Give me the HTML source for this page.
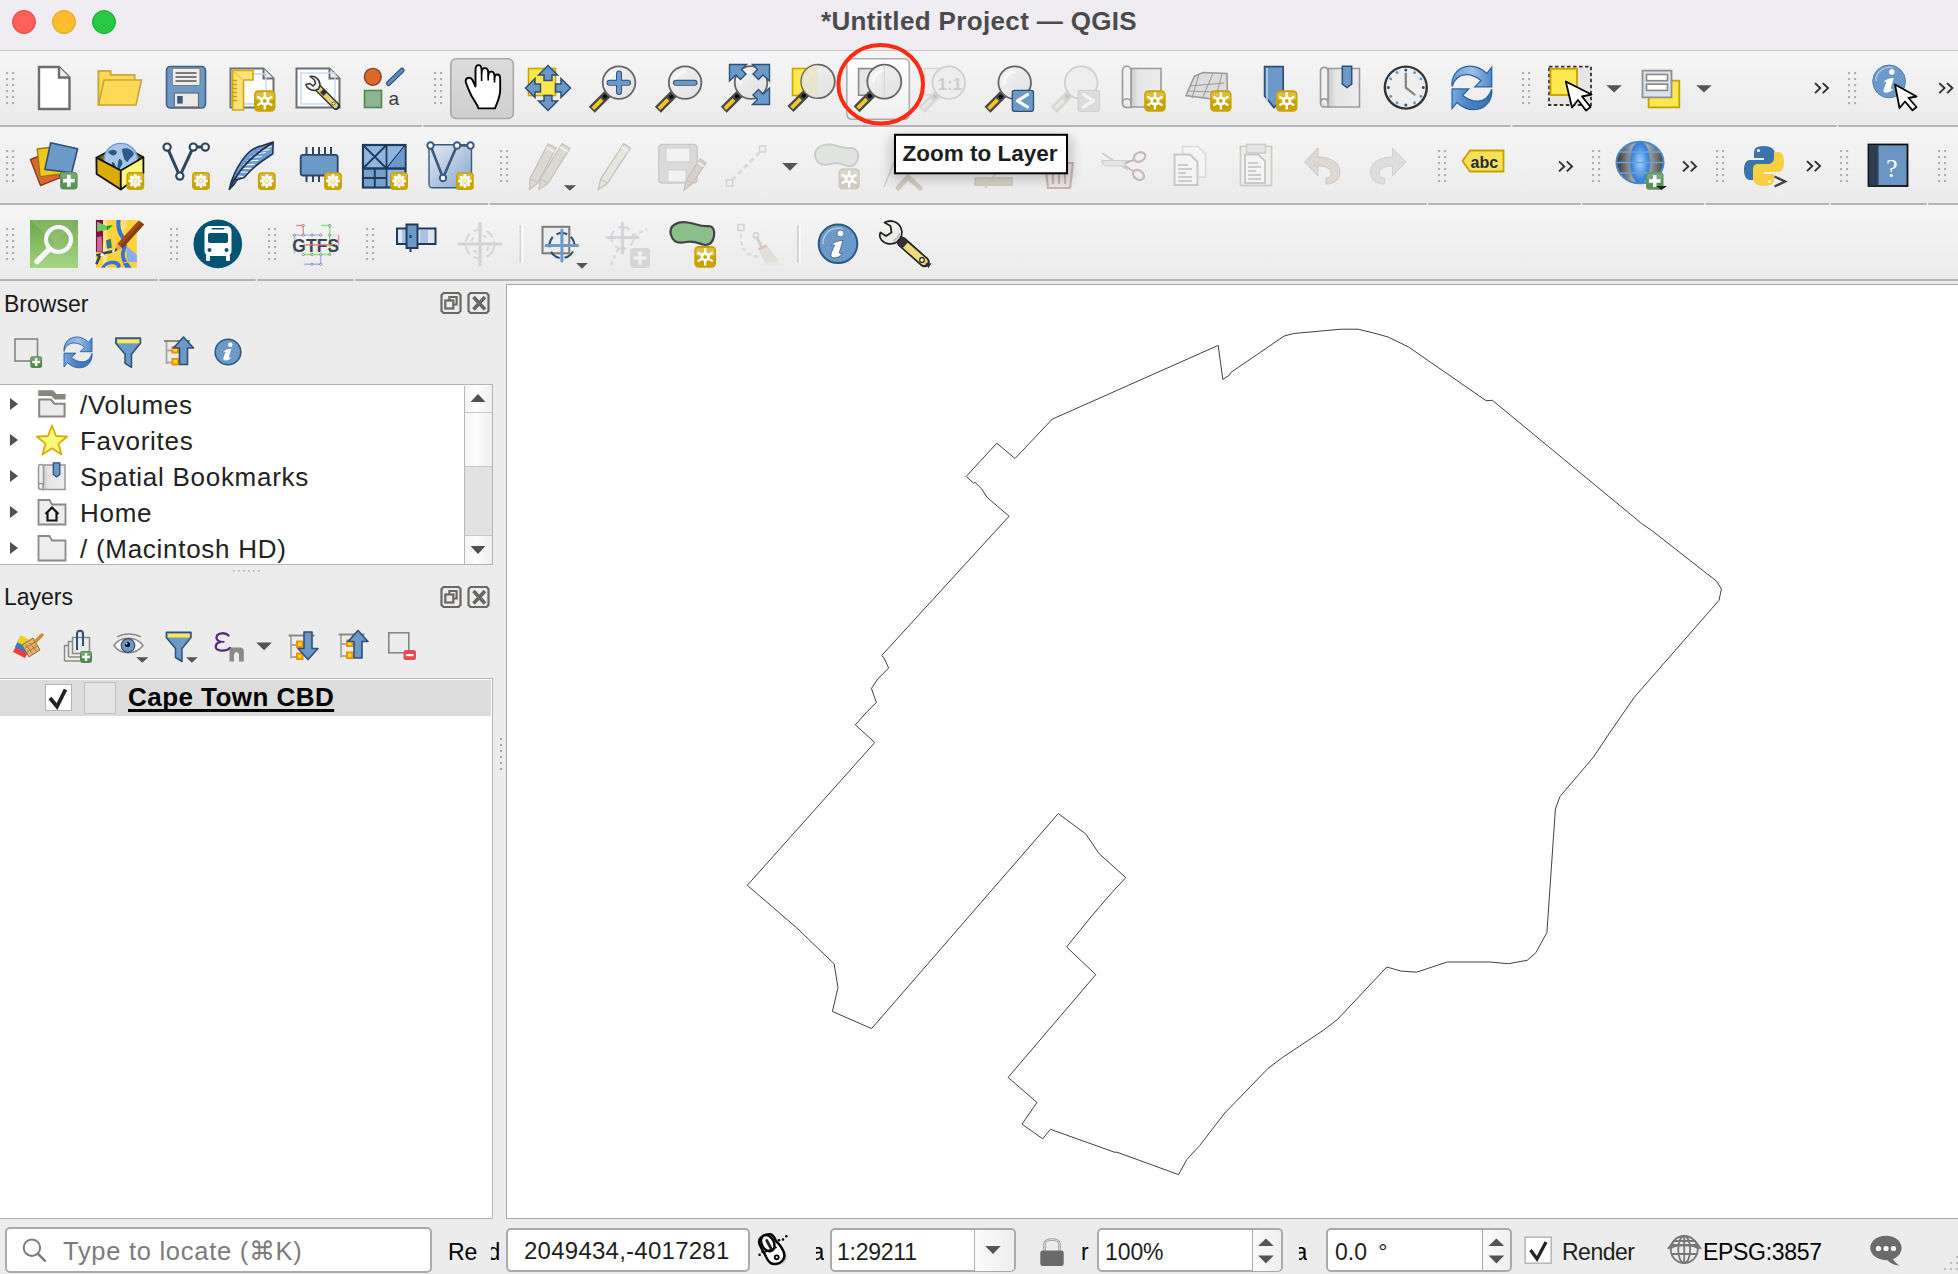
<!DOCTYPE html>
<html><head><meta charset="utf-8">
<style>
*{margin:0;padding:0;box-sizing:border-box}
html,body{width:1958px;height:1274px;overflow:hidden;background:#ececec;font-family:"Liberation Sans",sans-serif;position:relative}
.a{position:absolute}
#title{left:0;top:0;width:1958px;height:51px;background:#efecf2;border-bottom:1px solid #cac8cc}
#title .t{left:0;width:1958px;top:6px;text-align:center;font-weight:bold;font-size:26px;color:#4b4b4d;letter-spacing:0.35px}
.tl{width:24px;height:24px;border-radius:50%;top:10px}
.tb{left:0;width:1958px;background:linear-gradient(#f5f5f5,#ebebeb)}
.tbl{left:0;width:1958px;height:2px;background:#b4b4b4}
.grip{width:10px;background-image:radial-gradient(circle at 1px 1px,#a8a8a8 1px,transparent 1.2px);background-size:6px 6px}
.dock{font-size:23px;color:#1a1a1a}
.tree{font-size:26px;color:#222;letter-spacing:0.72px}
.st{font-size:25px;color:#1e1e1e}
.box{background:#fff;border:2px solid #aaa;border-radius:5px}
svg{overflow:visible}
</style></head><body>
<!-- title bar -->
<div id="title" class="a">
  <div class="a tl" style="left:12px;background:#fe5f57;border:1px solid #e2463f"></div>
  <div class="a tl" style="left:52px;background:#febc2e;border:1px solid #e1a116"></div>
  <div class="a tl" style="left:92px;background:#28c840;border:1px solid #12ac28"></div>
  <div class="a t">*Untitled Project — QGIS</div>
</div>
<!-- toolbars -->
<div class="a tb" style="top:51px;height:74px"></div>
<div class="a tbl" style="top:125px"></div>
<div class="a tb" style="top:127px;height:76px"></div>
<div class="a tbl" style="top:203px"></div>
<div class="a tb" style="top:205px;height:74px"></div>
<div class="a tbl" style="top:279px"></div>

<!-- left panel -->
<div class="a dock" style="left:4px;top:291px">Browser</div>
<div class="a dock" style="left:4px;top:584px">Layers</div>

<!-- browser tree -->
<div class="a" style="left:0;top:384px;width:493px;height:181px;background:#fff;border:1.5px solid #b4b4b4;border-left:none"></div>

<!-- layers tree -->
<div class="a" style="left:0;top:678px;width:493px;height:540.5px;background:#fff;border:1.5px solid #b4b4b4;border-left:none"></div>

<!-- map canvas -->
<div class="a" style="left:505.5px;top:284px;width:1453px;height:934.5px;background:#fff;border:1.5px solid #a8a8a8;border-right:none"></div>

<!-- status bar -->
<div class="a box" style="left:5px;top:1227px;width:427px;height:46px"></div>
<div class="a box" style="left:506px;top:1228px;width:244px;height:44px"></div>
<div class="a box" style="left:830px;top:1228px;width:186px;height:44px"></div>
<div class="a box" style="left:1097px;top:1228px;width:186px;height:44px"></div>
<div class="a box" style="left:1326px;top:1228px;width:186px;height:44px"></div>

<!-- browser tree contents -->
<div class="a" style="left:464px;top:385.5px;width:27.5px;height:178px;background:linear-gradient(90deg,#f4f4f4,#fdfdfd 40%,#efefef);border-left:1.2px solid #b8b8b8"></div>
<div class="a" style="left:465px;top:412px;width:27px;height:1px;background:#c8c8c8"></div>
<div class="a" style="left:465px;top:466px;width:27px;height:70px;background:#e2e2e2;border-top:1px solid #c8c8c8;border-bottom:1px solid #c8c8c8"></div>
<div class="a tree" style="left:80px;top:390px">/Volumes</div>
<div class="a tree" style="left:80px;top:426px">Favorites</div>
<div class="a tree" style="left:80px;top:462px">Spatial Bookmarks</div>
<div class="a tree" style="left:80px;top:498px">Home</div>
<div class="a tree" style="left:80px;top:534px">/ (Macintosh HD)</div>

<!-- layer item -->
<div class="a" style="left:0;top:680px;width:491px;height:36px;background:#dcdcdc"></div>
<div class="a" style="left:45px;top:684px;width:27px;height:27px;background:#fff;border:1.5px solid #b4b4b4"></div>
<div class="a" style="left:84px;top:682px;width:32px;height:32px;background:#e4e4e4;border:1.5px solid #c0c0c0"></div>
<div class="a" style="left:128px;top:682px;font-weight:bold;font-size:26px;color:#000;letter-spacing:0.45px;text-decoration:underline;text-decoration-thickness:3px;text-underline-offset:3px;text-decoration-skip-ink:none">Cape Town CBD</div>

<div class="a" style="left:974px;top:1230px;width:40px;height:41px;background:linear-gradient(90deg,#fbfbfb,#eeeeee);border-left:1.5px solid #b0b0b0;border-radius:0 4px 4px 0"></div>
<div class="a" style="left:1252px;top:1230px;width:29px;height:41px;background:linear-gradient(90deg,#fbfbfb,#efefef);border-left:1.5px solid #a8a8a8;border-radius:0 4px 4px 0"></div>
<div class="a" style="left:1482px;top:1230px;width:28px;height:40px;background:linear-gradient(90deg,#fbfbfb,#efefef);border-left:1.5px solid #a8a8a8;border-radius:0 4px 4px 0"></div>
<!-- status bar text -->
<div class="a st" style="left:63px;top:1236px;font-size:25.5px;color:#7b7b7b;letter-spacing:0.72px">Type to locate (⌘K)</div>
<div class="a st" style="left:448px;top:1239px;font-size:23px;color:#000">Re</div>
<div class="a" style="left:491px;top:1238px;width:10px;height:27px;overflow:hidden"><div class="a st" style="left:-3.5px;top:1px;font-size:23px;color:#000">d</div></div>
<div class="a st" style="left:524px;top:1237px;font-size:24px;letter-spacing:0.25px">2049434,-4017281</div>
<div class="a" style="left:816px;top:1238px;width:8px;height:27px;overflow:hidden"><div class="a st" style="left:-4.5px;top:1px;font-size:23px;color:#000">a</div></div>
<div class="a st" style="left:837px;top:1239px;font-size:23px;letter-spacing:-0.25px">1:29211</div>
<div class="a st" style="left:1081px;top:1239px;font-size:23px;color:#000">r</div>
<div class="a st" style="left:1105px;top:1239px;font-size:23px;letter-spacing:-0.1px">100%</div>
<div class="a" style="left:1299px;top:1238px;width:8px;height:27px;overflow:hidden"><div class="a st" style="left:-4.5px;top:1px;font-size:23px;color:#000">a</div></div>
<div class="a st" style="left:1335px;top:1239px;font-size:23px;word-spacing:5px">0.0 °</div>
<div class="a st" style="left:1562px;top:1239px;font-size:23px;letter-spacing:-0.5px">Render</div>
<div class="a st" style="left:1703px;top:1239px;font-size:23px;letter-spacing:-0.3px;color:#000">EPSG:3857</div>

<svg class="a" style="left:0;top:0;position:absolute" width="1958" height="1274"><polygon points="966.2,476.5 996.8,443.2 1015,458.5 1052.2,419.2 1218.2,345.4 1222.8,379.5 1229.4,375.1 1231,372.3 1284.4,335.9 1293.8,333.5 1340.9,329.2 1358.1,329.2 1377,333.9 1388,337 1408.4,346.9 1486.1,400.7 1492.4,400.3 1641.6,523.5 1652.8,531.3 1716.7,581.3 1721.4,589.1 1719,600.3 1634,697.6 1609,733.8 1593.4,757.2 1560,796.5 1555.4,809 1546.9,932.6 1535.8,952.8 1527.2,960.3 1508.5,963.7 1489.5,962 1447.2,962 1416.6,972.2 1400.6,971 1386.8,967 1337.5,1019.4 1323.2,1030.4 1282.6,1057.4 1268,1068.4 1224.8,1113 1199.7,1145.5 1186.8,1159.6 1178.5,1174.6 1117,1152.2 1114.4,1152.2 1050.4,1129.3 1042.7,1138.8 1022,1124.1 1037,1102.5 1008.1,1077.4 1095.8,974.6 1066.6,947 1092,915.6 1111.7,892.8 1125.8,877.6 1099.1,853.6 1085.8,834 1058.3,813.5 871.6,1028.6 832.4,1011.5 838,987.7 834.1,963.8 796.5,927.7 747.3,885.3 874.8,742.5 855.3,724.9 867,711.7 876.4,702.5 871.4,688.5 877.7,679 888.7,668.1 884.2,658.3 881.7,655.5 1009.1,516.2 987.1,497.4 981.6,488.8 974.9,482.2 973.75,483.3" fill="none" stroke="#404040" stroke-width="1" stroke-linejoin="round"/></svg>
<svg class="a" style="left:0;top:0;position:absolute" width="1958" height="1274" viewBox="0 0 1958 1274">
<defs><linearGradient id="lensg" x1="0" y1="0" x2="1" y2="1"><stop offset="0" stop-color="#f6f6f6"/><stop offset=".5" stop-color="#e9e9e9"/><stop offset="1" stop-color="#e2e2e2"/></linearGradient></defs>
<rect x="6.5" y="72.5" width="2.2" height="2.2" fill="#fbfbfb"/><rect x="6" y="72" width="2.2" height="2.2" fill="#b0b0b0"/>
<rect x="12.5" y="72.5" width="2.2" height="2.2" fill="#fbfbfb"/><rect x="12" y="72" width="2.2" height="2.2" fill="#b0b0b0"/>
<rect x="6.5" y="78.5" width="2.2" height="2.2" fill="#fbfbfb"/><rect x="6" y="78" width="2.2" height="2.2" fill="#b0b0b0"/>
<rect x="12.5" y="78.5" width="2.2" height="2.2" fill="#fbfbfb"/><rect x="12" y="78" width="2.2" height="2.2" fill="#b0b0b0"/>
<rect x="6.5" y="84.5" width="2.2" height="2.2" fill="#fbfbfb"/><rect x="6" y="84" width="2.2" height="2.2" fill="#b0b0b0"/>
<rect x="12.5" y="84.5" width="2.2" height="2.2" fill="#fbfbfb"/><rect x="12" y="84" width="2.2" height="2.2" fill="#b0b0b0"/>
<rect x="6.5" y="90.5" width="2.2" height="2.2" fill="#fbfbfb"/><rect x="6" y="90" width="2.2" height="2.2" fill="#b0b0b0"/>
<rect x="12.5" y="90.5" width="2.2" height="2.2" fill="#fbfbfb"/><rect x="12" y="90" width="2.2" height="2.2" fill="#b0b0b0"/>
<rect x="6.5" y="96.5" width="2.2" height="2.2" fill="#fbfbfb"/><rect x="6" y="96" width="2.2" height="2.2" fill="#b0b0b0"/>
<rect x="12.5" y="96.5" width="2.2" height="2.2" fill="#fbfbfb"/><rect x="12" y="96" width="2.2" height="2.2" fill="#b0b0b0"/>
<rect x="6.5" y="102.5" width="2.2" height="2.2" fill="#fbfbfb"/><rect x="6" y="102" width="2.2" height="2.2" fill="#b0b0b0"/>
<rect x="12.5" y="102.5" width="2.2" height="2.2" fill="#fbfbfb"/><rect x="12" y="102" width="2.2" height="2.2" fill="#b0b0b0"/>
<path d="M39,67H59.0L69.5,77.5V109H39Z" fill="#fff" stroke="#6e6e6e" stroke-width="2.4" stroke-linejoin="miter"/>
<path d="M59.0,67V77.5H69.5" fill="#eee" stroke="#6e6e6e" stroke-width="2.4"/>
<path d="M98.5,104.5V71H110.5V75H134.5V80" fill="#fdd94f" stroke="#c6a53a" stroke-width="1.6"/>
<path d="M98.5,71H110.5V75H134.5V104.5H98.5Z" fill="#fdd94f" stroke="#c6a53a" stroke-width="1.6"/>
<path d="M98.5,105L104,80H141.5L136,105Z" fill="#fed955" stroke="#c6a53a" stroke-width="1.6"/>
<rect x="166.5" y="66.5" width="39" height="41.5" rx="4" fill="#6b9ac9" stroke="#3f6085" stroke-width="1.6"/>
<rect x="172.3" y="68.3" width="27.7" height="17.2" rx="1.5" fill="#eeeeee" stroke="#7a7a7a" stroke-width="1"/>
<path d="M175.5,73H196.5M175.5,77H196.5M175.5,81H196.5" stroke="#555" stroke-width="1.3"/>
<rect x="174.3" y="93" width="24.2" height="14" fill="#e9e9e9" stroke="#6a6a6a" stroke-width="1.2"/>
<rect x="177.2" y="96" width="5.5" height="7.6" fill="#3d5a7c"/>
<path d="M230.5,68.5H263.5L273.5,78.5V107.5H230.5Z" fill="#fff" stroke="#6e6e6e" stroke-width="2" stroke-linejoin="miter"/>
<path d="M263.5,68.5V78.5H273.5" fill="#eee" stroke="#6e6e6e" stroke-width="2"/>
<path d="M236,74H266V104H236" fill="none" stroke="#c0d4f4" stroke-width="1.3"/>
<path d="M232.6,70.5H253V80H243.5V110H232.6Z" fill="#fde27a" stroke="#d4a800" stroke-width="1.6"/>
<path d="M233,80.5h4M233,84.5h4M233,88.5h4M233,92.5h4M233,96.5h4M233,100.5h4" stroke="#c89b00" stroke-width="1.3"/>
<path d="M234,72L242,79" stroke="#e0b810" stroke-width="1"/>
<g transform="translate(254,90.2) scale(0.9772727272727273)"><rect x="0" y="0" width="22" height="22" rx="4.5" fill="#c9a300"/><rect x="1.5" y="2" width="19" height="8.5" rx="2.5" fill="#dcc350" opacity=".85"/><g stroke="#fff" stroke-width="2.3"><path d="M11 2.2v17.6M3.4 6.6l15.2 8.8M3.4 15.4l15.2-8.8"/></g><circle cx="11" cy="11" r="4.6" fill="#fff"/><circle cx="11" cy="11" r="1.9" fill="#c9a300"/></g>
<path d="M296.5,68.5H329.5L339.5,78.5V107.5H296.5Z" fill="#fff" stroke="#6e6e6e" stroke-width="2" stroke-linejoin="miter"/>
<path d="M329.5,68.5V78.5H339.5" fill="#eee" stroke="#6e6e6e" stroke-width="2"/>
<rect x="301" y="73" width="34" height="31" fill="none" stroke="#c0d4f4" stroke-width="1.3"/>
<path d="M318,88L336,106" stroke="#333" stroke-width="8" stroke-linecap="round"/>
<path d="M318.5,88.5L335.5,105.5" stroke="#e8d070" stroke-width="5" stroke-linecap="round"/>
<path d="M322,90.5L325.5,94" stroke="#333" stroke-width="5.5"/>
<path d="M310,76.5C315,75.5 320,79 320,85L318.5,89L314.5,90.5C309.5,90.5 306,87 306,84.5L310,83.5L313,86L315.5,83.5L314.5,80Z" fill="#eceeea" stroke="#333" stroke-width="1.5" stroke-linejoin="round"/>
<circle cx="333.5" cy="103.5" r="1.5" fill="#fff" stroke="#333" stroke-width=".8"/>
<circle cx="372.8" cy="76.8" r="8.4" fill="#d9692f" stroke="#8a3f1c" stroke-width="1.4"/>
<line x1="388.5" y1="83.4" x2="402" y2="70.3" stroke="#2f4f77" stroke-width="5.2" stroke-linecap="round"/>
<line x1="388.5" y1="83.4" x2="402" y2="70.3" stroke="#5b8ac4" stroke-width="3" stroke-linecap="round"/>
<rect x="364.5" y="90.5" width="17" height="17" fill="#8fb48f" stroke="#4e8a4e" stroke-width="1.6"/>
<text x="388.5" y="105.3" font-family="Liberation Sans" font-size="19" fill="#3a3a3a">a</text>
<rect x="434.5" y="72.5" width="2.2" height="2.2" fill="#fbfbfb"/><rect x="434" y="72" width="2.2" height="2.2" fill="#b0b0b0"/>
<rect x="440.5" y="72.5" width="2.2" height="2.2" fill="#fbfbfb"/><rect x="440" y="72" width="2.2" height="2.2" fill="#b0b0b0"/>
<rect x="434.5" y="78.5" width="2.2" height="2.2" fill="#fbfbfb"/><rect x="434" y="78" width="2.2" height="2.2" fill="#b0b0b0"/>
<rect x="440.5" y="78.5" width="2.2" height="2.2" fill="#fbfbfb"/><rect x="440" y="78" width="2.2" height="2.2" fill="#b0b0b0"/>
<rect x="434.5" y="84.5" width="2.2" height="2.2" fill="#fbfbfb"/><rect x="434" y="84" width="2.2" height="2.2" fill="#b0b0b0"/>
<rect x="440.5" y="84.5" width="2.2" height="2.2" fill="#fbfbfb"/><rect x="440" y="84" width="2.2" height="2.2" fill="#b0b0b0"/>
<rect x="434.5" y="90.5" width="2.2" height="2.2" fill="#fbfbfb"/><rect x="434" y="90" width="2.2" height="2.2" fill="#b0b0b0"/>
<rect x="440.5" y="90.5" width="2.2" height="2.2" fill="#fbfbfb"/><rect x="440" y="90" width="2.2" height="2.2" fill="#b0b0b0"/>
<rect x="434.5" y="96.5" width="2.2" height="2.2" fill="#fbfbfb"/><rect x="434" y="96" width="2.2" height="2.2" fill="#b0b0b0"/>
<rect x="440.5" y="96.5" width="2.2" height="2.2" fill="#fbfbfb"/><rect x="440" y="96" width="2.2" height="2.2" fill="#b0b0b0"/>
<rect x="434.5" y="102.5" width="2.2" height="2.2" fill="#fbfbfb"/><rect x="434" y="102" width="2.2" height="2.2" fill="#b0b0b0"/>
<rect x="440.5" y="102.5" width="2.2" height="2.2" fill="#fbfbfb"/><rect x="440" y="102" width="2.2" height="2.2" fill="#b0b0b0"/>
<defs><linearGradient id="gbtn" x1="0" y1="0" x2="0" y2="1"><stop offset="0" stop-color="#dcdcdc"/><stop offset="1" stop-color="#cfcfcf"/></linearGradient><linearGradient id="wbtn" x1="0" y1="0" x2="0" y2="1"><stop offset="0" stop-color="#ffffff"/><stop offset="1" stop-color="#efefef"/></linearGradient></defs>
<rect x="450.8" y="58.8" width="62.5" height="59.7" rx="5" fill="url(#gbtn)" stroke="#a9a9a9" stroke-width="1.6"/>
<path d="M475.5,86.5V70C475.5,63.5 481.6,63.5 481.6,70V73C481.6,66.5 488.2,66.5 488.2,73V76.5C488.2,70 494.5,70 494.5,76.5V79C494.5,73 500.2,73 500.2,79V90C500.2,97 497,103 495,108.4H478.5C477.5,105 476,103 474,100C471,96 470,93 468,88C466.5,84 465,81.5 465.8,80C467,77 471,77 472.5,80Z" fill="#fff" stroke="#000" stroke-width="1.9" stroke-linejoin="round"/>
<path d="M481.6,73V81M488.2,76.5V80.5M494.5,79V82.5" stroke="#000" stroke-width="1.6"/>
<rect x="528.5" y="68.5" width="27" height="27" fill="#fde84f" stroke="#c8a800" stroke-width="1.6"/>
<g fill="#6b99c8" stroke="#2f4f77" stroke-width="1.5" stroke-linejoin="miter"><path d="M548,65.5L557.5,75H552V80.5H544V75H538.5Z"/><path d="M548,110.5L557.5,101H552V95.5H544V101H538.5Z"/><path d="M525.5,88L535,78.5V84H540.5V92H535V97.5Z"/><path d="M570.5,88L561,78.5V84H555.5V92H561V97.5Z"/></g>
<line x1="607.59" y1="94.00999999999999" x2="591.7900000000001" y2="109.80999999999999" stroke="#474747" stroke-width="8.4"/>
<line x1="601.902" y1="99.698" x2="592.8960000000001" y2="108.704" stroke="#f5c62a" stroke-width="3.8000000000000007"/>
<circle cx="605.062" cy="96.538" r="2.1" fill="#000"/>
<circle cx="619" cy="82.6" r="16.3" fill="url(#lensg)" stroke="#656565" stroke-width="1.8"/>
<path d="M608.894,84.22999999999999 A10.758000000000001,10.758000000000001 0 0 1 619.815,71.842" fill="none" stroke="#fafafa" stroke-width="2.6" opacity=".9"/>
<path d="M619,73.5V92M609.5,82.8H628" stroke="#2f4f77" stroke-width="6" stroke-linecap="round"/>
<path d="M619,73.5V92M609.5,82.8H628" stroke="#6b99c8" stroke-width="4.2" stroke-linecap="round"/>
<line x1="673.69" y1="94.00999999999999" x2="657.8900000000001" y2="109.80999999999999" stroke="#474747" stroke-width="8.4"/>
<line x1="668.0020000000001" y1="99.698" x2="658.9960000000001" y2="108.704" stroke="#f5c62a" stroke-width="3.8000000000000007"/>
<circle cx="671.162" cy="96.538" r="2.1" fill="#000"/>
<circle cx="685.1" cy="82.6" r="16.3" fill="url(#lensg)" stroke="#656565" stroke-width="1.8"/>
<path d="M674.994,84.22999999999999 A10.758000000000001,10.758000000000001 0 0 1 685.9150000000001,71.842" fill="none" stroke="#fafafa" stroke-width="2.6" opacity=".9"/>
<path d="M676,82.8H694.5" stroke="#2f4f77" stroke-width="6" stroke-linecap="round"/><path d="M676,82.8H694.5" stroke="#6b99c8" stroke-width="4.2" stroke-linecap="round"/>
<line x1="739.59" y1="93.91" x2="723.7900000000001" y2="109.71" stroke="#474747" stroke-width="8.4"/>
<line x1="733.902" y1="99.598" x2="724.8960000000001" y2="108.604" stroke="#f5c62a" stroke-width="3.8000000000000007"/>
<circle cx="737.062" cy="96.438" r="2.1" fill="#000"/>
<circle cx="751" cy="82.5" r="16.3" fill="url(#lensg)" stroke="#656565" stroke-width="1.8"/>
<path d="M740.894,84.13 A10.758000000000001,10.758000000000001 0 0 1 751.815,71.742" fill="none" stroke="#fafafa" stroke-width="2.6" opacity=".9"/>
<g fill="#6b99c8" stroke="#2f4f77" stroke-width="1.4"><path d="M729.5,64.5H746.5L741.5,69.5L746,74L740.5,79.5L736,75L729.5,81Z"/><path d="M769.5,64.5H752.5L757.5,69.5L753,74L758.5,79.5L763,75L769.5,81Z"/><path d="M769.5,104.5H752.5L757.5,99.5L753,95L758.5,89.5L763,94L769.5,88Z"/></g>
<rect x="792.5" y="68.5" width="16" height="27" fill="#fde84f" stroke="#c8a800" stroke-width="1.6"/>
<line x1="806.24" y1="93.16000000000001" x2="790.44" y2="108.96000000000001" stroke="#474747" stroke-width="8.4"/>
<line x1="800.552" y1="98.84800000000001" x2="791.546" y2="107.85400000000001" stroke="#f5c62a" stroke-width="3.8000000000000007"/>
<circle cx="803.712" cy="95.68800000000002" r="2.1" fill="#000"/>
<circle cx="818" cy="81.4" r="16.8" fill="url(#lensg)" stroke="#656565" stroke-width="1.8"/>
<path d="M807.584,83.08000000000001 A11.088000000000001,11.088000000000001 0 0 1 818.84,70.31200000000001" fill="none" stroke="#fafafa" stroke-width="2.6" opacity=".9"/>
<path d="M818,65 A16.4,16.4 0 0 0 818,97.8Z" fill="#e9e4c4" opacity=".8"/>
<rect x="846.8" y="58.8" width="62.5" height="60.5" rx="5" fill="url(#wbtn)" stroke="#acacac" stroke-width="1.6"/>
<rect x="858.6" y="68.6" width="27" height="26.6" fill="#e6e6e6" stroke="#8a8a8a" stroke-width="1.6"/>
<line x1="872.4" y1="93.5" x2="856.6" y2="109.3" stroke="#474747" stroke-width="8.4"/>
<line x1="866.712" y1="99.188" x2="857.706" y2="108.194" stroke="#f5c62a" stroke-width="3.8000000000000007"/>
<circle cx="869.872" cy="96.028" r="2.1" fill="#000"/>
<circle cx="884.3" cy="81.6" r="17" fill="url(#lensg)" stroke="#656565" stroke-width="1.8"/>
<path d="M873.76,83.3 A11.22,11.22 0 0 1 885.15,70.38" fill="none" stroke="#fafafa" stroke-width="2.6" opacity=".9"/>
<path d="M884.3,65 V98" stroke="#d6d6d6" stroke-width="1.2"/>
<rect x="924.5" y="68.5" width="16" height="26.3" fill="#efefef" stroke="#d6d6d6" stroke-width="1.5"/>
<line x1="937.39" y1="94.00999999999999" x2="921.59" y2="109.80999999999999" stroke="#d6d6d6" stroke-width="8.4"/>
<line x1="931.702" y1="99.698" x2="922.696" y2="108.704" stroke="#e8e5dc" stroke-width="3.8000000000000007"/>
<circle cx="934.862" cy="96.538" r="2.1" fill="#c4c4c4"/>
<circle cx="948.8" cy="82.6" r="16.3" fill="#eeeeee" stroke="#d0d0d0" stroke-width="1.8"/>
<text x="937.5" y="89.5" font-family="Liberation Sans" font-weight="bold" font-size="17" fill="#cdcdcd">1:1</text>
<line x1="1003.2900000000001" y1="94.00999999999999" x2="987.4900000000001" y2="109.80999999999999" stroke="#474747" stroke-width="8.4"/>
<line x1="997.6020000000001" y1="99.698" x2="988.5960000000001" y2="108.704" stroke="#f5c62a" stroke-width="3.8000000000000007"/>
<circle cx="1000.7620000000001" cy="96.538" r="2.1" fill="#000"/>
<circle cx="1014.7" cy="82.6" r="16.3" fill="url(#lensg)" stroke="#656565" stroke-width="1.8"/>
<path d="M1004.594,84.22999999999999 A10.758000000000001,10.758000000000001 0 0 1 1015.5150000000001,71.842" fill="none" stroke="#fafafa" stroke-width="2.6" opacity=".9"/>
<rect x="1012.3" y="90.3" width="21.2" height="21" rx="2.2" fill="#6b99c8" stroke="#2f4f77" stroke-width="1.3"/>
<path d="M1027.5,94.5L1017.5,100.8L1027.5,107" fill="none" stroke="#fff" stroke-width="3.2" stroke-linecap="round" stroke-linejoin="round"/>
<line x1="1069.6899999999998" y1="94.00999999999999" x2="1053.8899999999999" y2="109.80999999999999" stroke="#d6d6d6" stroke-width="8.4"/>
<line x1="1064.002" y1="99.698" x2="1054.9959999999999" y2="108.704" stroke="#e8e5dc" stroke-width="3.8000000000000007"/>
<circle cx="1067.1619999999998" cy="96.538" r="2.1" fill="#c4c4c4"/>
<circle cx="1081.1" cy="82.6" r="16.3" fill="#eeeeee" stroke="#d0d0d0" stroke-width="1.8"/>
<rect x="1078.2" y="90.3" width="21.2" height="21" rx="2.2" fill="#dcdcdc" stroke="#d2d2d2" stroke-width="1.3"/>
<path d="M1083.5,94.5L1093.5,100.8L1083.5,107" fill="none" stroke="#f4f4f4" stroke-width="3.2" stroke-linecap="round" stroke-linejoin="round"/>
<defs><linearGradient id="paper" x1="0" y1="0" x2="1" y2="0"><stop offset="0" stop-color="#c8c8c8"/><stop offset=".25" stop-color="#e6e6e6"/><stop offset="1" stop-color="#ececec"/></linearGradient></defs>
<path d="M1131,68.5H1161V107H1131Z" fill="url(#paper)" stroke="#9a9a9a" stroke-width="1.6"/>
<path d="M1122.5,70.5a4,4 0 0 1 8.5,0V103a4,4 0 0 0 -8.5,0Z" fill="#f0f0f0" stroke="#9a9a9a" stroke-width="1.6"/>
<path d="M1122.5,103V104a4,3.5 0 0 0 4.5,3.5H1132" fill="#ddd" stroke="#9a9a9a" stroke-width="1.6"/>
<g transform="translate(1144.2,90.2) scale(0.9772727272727273)"><rect x="0" y="0" width="22" height="22" rx="4.5" fill="#c9a300"/><rect x="1.5" y="2" width="19" height="8.5" rx="2.5" fill="#dcc350" opacity=".85"/><g stroke="#fff" stroke-width="2.3"><path d="M11 2.2v17.6M3.4 6.6l15.2 8.8M3.4 15.4l15.2-8.8"/></g><circle cx="11" cy="11" r="4.6" fill="#fff"/><circle cx="11" cy="11" r="1.9" fill="#c9a300"/></g>
<path d="M1186,95.5L1194.5,76L1203,72.5L1227,73.5L1227.5,100.5L1208,98.5Z" fill="#dcdcdc" stroke="#9a9a9a" stroke-width="1.6"/>
<path d="M1190,86L1224,83M1188,91L1214,92M1199,74L1192,98M1213,73L1203,97M1222,74L1216,96" stroke="#999" stroke-width="1" fill="none"/>
<g transform="translate(1210.1,90.2) scale(0.9772727272727273)"><rect x="0" y="0" width="22" height="22" rx="4.5" fill="#c9a300"/><rect x="1.5" y="2" width="19" height="8.5" rx="2.5" fill="#dcc350" opacity=".85"/><g stroke="#fff" stroke-width="2.3"><path d="M11 2.2v17.6M3.4 6.6l15.2 8.8M3.4 15.4l15.2-8.8"/></g><circle cx="11" cy="11" r="4.6" fill="#fff"/><circle cx="11" cy="11" r="1.9" fill="#c9a300"/></g>
<path d="M1264.6,66.6H1283.2V97L1274,107.6L1264.6,96Z" fill="#6b99c8" stroke="#2f4f77" stroke-width="1.7"/>
<path d="M1267,68V102" stroke="#c5d8ef" stroke-width="1.5"/>
<path d="M1264.6,66.6H1283.2V100L1274,108L1264.6,98Z" fill="none"/>
<g transform="translate(1276,90.2) scale(0.9772727272727273)"><rect x="0" y="0" width="22" height="22" rx="4.5" fill="#c9a300"/><rect x="1.5" y="2" width="19" height="8.5" rx="2.5" fill="#dcc350" opacity=".85"/><g stroke="#fff" stroke-width="2.3"><path d="M11 2.2v17.6M3.4 6.6l15.2 8.8M3.4 15.4l15.2-8.8"/></g><circle cx="11" cy="11" r="4.6" fill="#fff"/><circle cx="11" cy="11" r="1.9" fill="#c9a300"/></g>
<path d="M1328,68.5H1359.5V107H1328Z" fill="url(#paper)" stroke="#9a9a9a" stroke-width="1.6"/>
<path d="M1320.5,70.5a3.8,3.8 0 0 1 7.5,0V102a3.8,3.8 0 0 0 -7.5,0Z" fill="#f0f0f0" stroke="#9a9a9a" stroke-width="1.6"/>
<path d="M1320.5,102V104a4,3.5 0 0 0 4.5,3H1329" fill="#ddd" stroke="#9a9a9a" stroke-width="1.6"/>
<path d="M1342.3,66.3H1351.7V84L1347,87.5L1342.3,84Z" fill="#6b99c8" stroke="#2f4f77" stroke-width="1.5"/>
<circle cx="1405.8" cy="87.6" r="21" fill="#efefef" stroke="#333" stroke-width="2.4"/>
<circle cx="1405.80" cy="70.10" r="1.5" fill="#2f4f77"/>
<circle cx="1414.55" cy="72.44" r="1.5" fill="#6b99c8"/>
<circle cx="1420.96" cy="78.85" r="1.5" fill="#6b99c8"/>
<circle cx="1423.30" cy="87.60" r="1.5" fill="#2f4f77"/>
<circle cx="1420.96" cy="96.35" r="1.5" fill="#6b99c8"/>
<circle cx="1414.55" cy="102.76" r="1.5" fill="#6b99c8"/>
<circle cx="1405.80" cy="105.10" r="1.5" fill="#2f4f77"/>
<circle cx="1397.05" cy="102.76" r="1.5" fill="#6b99c8"/>
<circle cx="1390.64" cy="96.35" r="1.5" fill="#6b99c8"/>
<circle cx="1388.30" cy="87.60" r="1.5" fill="#2f4f77"/>
<circle cx="1390.64" cy="78.85" r="1.5" fill="#6b99c8"/>
<circle cx="1397.05" cy="72.44" r="1.5" fill="#6b99c8"/>
<path d="M1405.8,73.5V87.6L1414.5,94.5" fill="none" stroke="#808080" stroke-width="2.2" stroke-linecap="round"/>
<defs><linearGradient id="blu" x1="0" y1="0" x2="0" y2="1"><stop offset="0" stop-color="#9cc0e8"/><stop offset=".5" stop-color="#4f8fd6"/><stop offset="1" stop-color="#2f6ab8"/></linearGradient></defs>
<defs><linearGradient id="rfa" x1="0" y1="0" x2="1" y2="0"><stop offset="0" stop-color="#6a9ad4"/><stop offset=".5" stop-color="#9cc0e6"/><stop offset="1" stop-color="#4f88c8"/></linearGradient><linearGradient id="rfb" x1="0" y1="0" x2="1" y2="0"><stop offset="0" stop-color="#3a70b0"/><stop offset=".6" stop-color="#4a82c4"/><stop offset="1" stop-color="#7aa8dc"/></linearGradient></defs>
<g transform="translate(1446,62) scale(1.0)"><path d="M6.1,24.5C5,14 12,4.1 24,4.1C31,4.1 36,7 40.8,11.4L45.7,5.3V24.9H29L35.1,18.4C30,14.5 25,12.6 20.4,12.6C13,12.6 8.5,17 6.1,24.5Z" fill="url(#rfa)" stroke="#2d62aa" stroke-width="1.3" stroke-linejoin="miter"/><path d="M6.1,24.5C5,14 12,4.1 24,4.1C31,4.1 36,7 40.8,11.4L45.7,5.3V24.9H29L35.1,18.4C30,14.5 25,12.6 20.4,12.6C13,12.6 8.5,17 6.1,24.5Z" fill="url(#rfb)" stroke="#2d62aa" stroke-width="1.3" transform="rotate(180 25.9 25.9)"/></g>
<rect x="1522.5" y="72.5" width="2.2" height="2.2" fill="#fbfbfb"/><rect x="1522" y="72" width="2.2" height="2.2" fill="#b0b0b0"/>
<rect x="1528.5" y="72.5" width="2.2" height="2.2" fill="#fbfbfb"/><rect x="1528" y="72" width="2.2" height="2.2" fill="#b0b0b0"/>
<rect x="1522.5" y="78.5" width="2.2" height="2.2" fill="#fbfbfb"/><rect x="1522" y="78" width="2.2" height="2.2" fill="#b0b0b0"/>
<rect x="1528.5" y="78.5" width="2.2" height="2.2" fill="#fbfbfb"/><rect x="1528" y="78" width="2.2" height="2.2" fill="#b0b0b0"/>
<rect x="1522.5" y="84.5" width="2.2" height="2.2" fill="#fbfbfb"/><rect x="1522" y="84" width="2.2" height="2.2" fill="#b0b0b0"/>
<rect x="1528.5" y="84.5" width="2.2" height="2.2" fill="#fbfbfb"/><rect x="1528" y="84" width="2.2" height="2.2" fill="#b0b0b0"/>
<rect x="1522.5" y="90.5" width="2.2" height="2.2" fill="#fbfbfb"/><rect x="1522" y="90" width="2.2" height="2.2" fill="#b0b0b0"/>
<rect x="1528.5" y="90.5" width="2.2" height="2.2" fill="#fbfbfb"/><rect x="1528" y="90" width="2.2" height="2.2" fill="#b0b0b0"/>
<rect x="1522.5" y="96.5" width="2.2" height="2.2" fill="#fbfbfb"/><rect x="1522" y="96" width="2.2" height="2.2" fill="#b0b0b0"/>
<rect x="1528.5" y="96.5" width="2.2" height="2.2" fill="#fbfbfb"/><rect x="1528" y="96" width="2.2" height="2.2" fill="#b0b0b0"/>
<rect x="1522.5" y="102.5" width="2.2" height="2.2" fill="#fbfbfb"/><rect x="1522" y="102" width="2.2" height="2.2" fill="#b0b0b0"/>
<rect x="1528.5" y="102.5" width="2.2" height="2.2" fill="#fbfbfb"/><rect x="1528" y="102" width="2.2" height="2.2" fill="#b0b0b0"/>
<rect x="1549" y="66.7" width="42" height="38.3" fill="#e6e6e6" stroke="#333" stroke-width="1.8" stroke-dasharray="3.5,2.5"/>
<rect x="1550.5" y="68.8" width="26.5" height="26.2" fill="#fde84f" stroke="#c8a000" stroke-width="1.8"/>
<path d="M1565.8,81.5L1591.5,94.5L1582,96.5L1590.5,107L1586,110.5L1578,100L1572,107.5Z" fill="#fff" stroke="#000" stroke-width="1.8" stroke-linejoin="round"/>
<path d="M1606.4,85.2H1621.8L1614.1,92.6Z" fill="#555"/>
<rect x="1648.6" y="80.7" width="30.7" height="26.7" fill="#fde84f" stroke="#c8a000" stroke-width="1.8"/>
<rect x="1642.5" y="70.6" width="29" height="26.8" fill="#dbe3ea" stroke="#909090" stroke-width="1.8"/>
<rect x="1646.5" y="74.5" width="21" height="6.2" fill="#fff" stroke="#888" stroke-width="1.6"/>
<rect x="1646.5" y="84.2" width="21" height="6.2" fill="#fff" stroke="#888" stroke-width="1.6"/>
<path d="M1696.3,85.2H1711.7L1704.0,92.6Z" fill="#555"/>
<path d="M1815,83.1l5.2,5l-5.2,5M1822.8,83.1l5.2,5l-5.2,5" fill="none" stroke="#333" stroke-width="2" stroke-linecap="butt" stroke-linejoin="miter"/>
<rect x="1848.5" y="72.5" width="2.2" height="2.2" fill="#fbfbfb"/><rect x="1848" y="72" width="2.2" height="2.2" fill="#b0b0b0"/>
<rect x="1854.5" y="72.5" width="2.2" height="2.2" fill="#fbfbfb"/><rect x="1854" y="72" width="2.2" height="2.2" fill="#b0b0b0"/>
<rect x="1848.5" y="78.5" width="2.2" height="2.2" fill="#fbfbfb"/><rect x="1848" y="78" width="2.2" height="2.2" fill="#b0b0b0"/>
<rect x="1854.5" y="78.5" width="2.2" height="2.2" fill="#fbfbfb"/><rect x="1854" y="78" width="2.2" height="2.2" fill="#b0b0b0"/>
<rect x="1848.5" y="84.5" width="2.2" height="2.2" fill="#fbfbfb"/><rect x="1848" y="84" width="2.2" height="2.2" fill="#b0b0b0"/>
<rect x="1854.5" y="84.5" width="2.2" height="2.2" fill="#fbfbfb"/><rect x="1854" y="84" width="2.2" height="2.2" fill="#b0b0b0"/>
<rect x="1848.5" y="90.5" width="2.2" height="2.2" fill="#fbfbfb"/><rect x="1848" y="90" width="2.2" height="2.2" fill="#b0b0b0"/>
<rect x="1854.5" y="90.5" width="2.2" height="2.2" fill="#fbfbfb"/><rect x="1854" y="90" width="2.2" height="2.2" fill="#b0b0b0"/>
<rect x="1848.5" y="96.5" width="2.2" height="2.2" fill="#fbfbfb"/><rect x="1848" y="96" width="2.2" height="2.2" fill="#b0b0b0"/>
<rect x="1854.5" y="96.5" width="2.2" height="2.2" fill="#fbfbfb"/><rect x="1854" y="96" width="2.2" height="2.2" fill="#b0b0b0"/>
<rect x="1848.5" y="102.5" width="2.2" height="2.2" fill="#fbfbfb"/><rect x="1848" y="102" width="2.2" height="2.2" fill="#b0b0b0"/>
<rect x="1854.5" y="102.5" width="2.2" height="2.2" fill="#fbfbfb"/><rect x="1854" y="102" width="2.2" height="2.2" fill="#b0b0b0"/>
<circle cx="1889.1" cy="81.4" r="16.4" fill="#6b99c8" stroke="#5580b0" stroke-width="1"/>
<path d="M1876,81 A13,13 0 0 1 1893,68" fill="none" stroke="#a8c4e4" stroke-width="1.5"/>
<circle cx="1891.8" cy="72" r="2.8" fill="#fff"/>
<path d="M1883.5,82.3C1885.7,79.3 1889.5,78 1893.8,78L1890.8,87.8C1890.4,89.3 1891.7,89.5 1893.4,88.6C1891.7,91.9 1887.8,93.3 1884.8,92.5C1883.1,91.9 1883.4,89.9 1884,88.2L1886.6,81.8C1885.7,81.6 1884.4,81.8 1883.5,82.3Z" fill="#fff"/>
<path d="M1895,84.5L1916.5,96.5L1908.5,98L1916.5,107L1912.5,110.3L1905,101.5L1899.5,108Z" fill="#fff" stroke="#000" stroke-width="1.8" stroke-linejoin="round"/>
<path d="M1939.3,83.1l5.2,5l-5.2,5M1947.1,83.1l5.2,5l-5.2,5" fill="none" stroke="#333" stroke-width="2" stroke-linecap="butt" stroke-linejoin="miter"/>
<ellipse cx="880.7" cy="84.2" rx="42.3" ry="39.3" fill="none" stroke="#fe2a12" stroke-width="4"/>
</svg>
<svg class="a" style="left:0;top:0;position:absolute" width="1958" height="1274" viewBox="0 0 1958 1274">
<rect x="6.5" y="150.5" width="2.2" height="2.2" fill="#fbfbfb"/><rect x="6" y="150" width="2.2" height="2.2" fill="#b0b0b0"/>
<rect x="12.5" y="150.5" width="2.2" height="2.2" fill="#fbfbfb"/><rect x="12" y="150" width="2.2" height="2.2" fill="#b0b0b0"/>
<rect x="6.5" y="156.5" width="2.2" height="2.2" fill="#fbfbfb"/><rect x="6" y="156" width="2.2" height="2.2" fill="#b0b0b0"/>
<rect x="12.5" y="156.5" width="2.2" height="2.2" fill="#fbfbfb"/><rect x="12" y="156" width="2.2" height="2.2" fill="#b0b0b0"/>
<rect x="6.5" y="162.5" width="2.2" height="2.2" fill="#fbfbfb"/><rect x="6" y="162" width="2.2" height="2.2" fill="#b0b0b0"/>
<rect x="12.5" y="162.5" width="2.2" height="2.2" fill="#fbfbfb"/><rect x="12" y="162" width="2.2" height="2.2" fill="#b0b0b0"/>
<rect x="6.5" y="168.5" width="2.2" height="2.2" fill="#fbfbfb"/><rect x="6" y="168" width="2.2" height="2.2" fill="#b0b0b0"/>
<rect x="12.5" y="168.5" width="2.2" height="2.2" fill="#fbfbfb"/><rect x="12" y="168" width="2.2" height="2.2" fill="#b0b0b0"/>
<rect x="6.5" y="174.5" width="2.2" height="2.2" fill="#fbfbfb"/><rect x="6" y="174" width="2.2" height="2.2" fill="#b0b0b0"/>
<rect x="12.5" y="174.5" width="2.2" height="2.2" fill="#fbfbfb"/><rect x="12" y="174" width="2.2" height="2.2" fill="#b0b0b0"/>
<rect x="6.5" y="180.5" width="2.2" height="2.2" fill="#fbfbfb"/><rect x="6" y="180" width="2.2" height="2.2" fill="#b0b0b0"/>
<rect x="12.5" y="180.5" width="2.2" height="2.2" fill="#fbfbfb"/><rect x="12" y="180" width="2.2" height="2.2" fill="#b0b0b0"/>
<path d="M30.4,159.5L50.2,152L60.3,177.6L40.5,185.5Z" fill="#d9692f" stroke="#8a3f1c" stroke-width="1.4" stroke-linejoin="round"/>
<path d="M37.2,149L57,146.5L61.2,174L40.1,176.7Z" fill="#efc81c" stroke="#9a7a10" stroke-width="1.4" stroke-linejoin="round"/>
<path d="M50.6,142.8L77.6,148.8L71.7,172.7L44.9,169.4Z" fill="#6b99c8" stroke="#2f4f77" stroke-width="1.6" stroke-linejoin="round"/>
<g transform="translate(60.1,172.1) scale(0.9722222222222222)"><rect x="0" y="0" width="18" height="18" rx="3.6" fill="#5b915b"/><rect x="1.3" y="1.3" width="15.4" height="6.5" rx="2" fill="#8fb58f" opacity=".6"/><path d="M9 3v12M3 9h12" stroke="#fff" stroke-width="3.6"/></g>
<path d="M96.4,157.6L106,152.5L135,152.5L143.4,157.3L120.8,170.5Z" fill="#7a6000" stroke="#111" stroke-width="1.6" stroke-linejoin="round"/>
<circle cx="120.8" cy="160.2" r="16.8" fill="#a8c6e6" stroke="#6d9ad0" stroke-width="1.4"/>
<path d="M108,152c3,-3 7,-3 9,0c-1,4 -5,5 -9,0zM122,149c5,-2 11,1 12,5c-2,4 -5,4 -6,8c-3,0 -5,-4 -6,-13zM112,162c3,0 5,5 3,9c-2,-1 -4,-5 -3,-9zM119,159c3,0 4,3 3,6c-2,2 -3,6 -4,9c-1,-4 -1,-10 1,-15z" fill="#2f5a87"/>
<path d="M96.4,157.6L120.8,170.5V189.4L96.6,174Z" fill="#dbad00" stroke="#111" stroke-width="1.8" stroke-linejoin="round"/>
<path d="M120.8,170.5L143.4,157.3V173.2L120.8,189.4Z" fill="#fef77a" stroke="#111" stroke-width="1.8" stroke-linejoin="round"/>
<g transform="translate(126.4,172.1) scale(0.9888888888888889)"><rect x="0" y="0" width="18" height="18" rx="3.6" fill="#c9a300"/><rect x="1.3" y="1.3" width="15.4" height="6.5" rx="2" fill="#d7bd45" opacity=".8"/><g fill="#fff"><ellipse cx="9" cy="4.4" rx="1.75" ry="2.5" transform="rotate(0 9 9)"/><ellipse cx="9" cy="4.4" rx="1.75" ry="2.5" transform="rotate(45 9 9)"/><ellipse cx="9" cy="4.4" rx="1.75" ry="2.5" transform="rotate(90 9 9)"/><ellipse cx="9" cy="4.4" rx="1.75" ry="2.5" transform="rotate(135 9 9)"/><ellipse cx="9" cy="4.4" rx="1.75" ry="2.5" transform="rotate(180 9 9)"/><ellipse cx="9" cy="4.4" rx="1.75" ry="2.5" transform="rotate(225 9 9)"/><ellipse cx="9" cy="4.4" rx="1.75" ry="2.5" transform="rotate(270 9 9)"/><ellipse cx="9" cy="4.4" rx="1.75" ry="2.5" transform="rotate(315 9 9)"/></g><circle cx="9" cy="9" r="2" fill="#fbf6e0"/></g>
<path d="M167.1,147.1L179.8,176.1L193.3,147.1H205.3" fill="none" stroke="#2d4560" stroke-width="3"/>
<circle cx="167.1" cy="147.1" r="3.6" fill="#fff" stroke="#2d4560" stroke-width="2.2"/>
<circle cx="179.8" cy="176.1" r="3.6" fill="#fff" stroke="#2d4560" stroke-width="2.2"/>
<circle cx="193.3" cy="147.1" r="3.6" fill="#fff" stroke="#2d4560" stroke-width="2.2"/>
<circle cx="205.3" cy="147.1" r="3.6" fill="#fff" stroke="#2d4560" stroke-width="2.2"/>
<g transform="translate(192.1,172.1) scale(0.9888888888888889)"><rect x="0" y="0" width="18" height="18" rx="3.6" fill="#c9a300"/><rect x="1.3" y="1.3" width="15.4" height="6.5" rx="2" fill="#d7bd45" opacity=".8"/><g fill="#fff"><ellipse cx="9" cy="4.4" rx="1.75" ry="2.5" transform="rotate(0 9 9)"/><ellipse cx="9" cy="4.4" rx="1.75" ry="2.5" transform="rotate(45 9 9)"/><ellipse cx="9" cy="4.4" rx="1.75" ry="2.5" transform="rotate(90 9 9)"/><ellipse cx="9" cy="4.4" rx="1.75" ry="2.5" transform="rotate(135 9 9)"/><ellipse cx="9" cy="4.4" rx="1.75" ry="2.5" transform="rotate(180 9 9)"/><ellipse cx="9" cy="4.4" rx="1.75" ry="2.5" transform="rotate(225 9 9)"/><ellipse cx="9" cy="4.4" rx="1.75" ry="2.5" transform="rotate(270 9 9)"/><ellipse cx="9" cy="4.4" rx="1.75" ry="2.5" transform="rotate(315 9 9)"/></g><circle cx="9" cy="9" r="2" fill="#fbf6e0"/></g>
<g transform="translate(224,138) scale(0.04396)"><path d="M120,1170C160,950 300,600 560,330C650,240 750,200 880,170L1120,90L1110,360C900,500 700,600 460,900L300,950C250,1050 180,1120 120,1170Z" fill="#6f9ad0" stroke="#1e3550" stroke-width="36" stroke-linejoin="round"/><g stroke="#fff" stroke-width="26" opacity=".9" fill="none"><path d="M260,860L440,880M320,770L540,780M380,690L620,690M440,610L700,600M520,520L780,510M600,440L860,420M690,370L950,330M790,300L1040,260M900,230L1080,190"/></g><path d="M150,1120C300,760 600,420 1100,110" fill="none" stroke="#1e3550" stroke-width="44"/><path d="M170,970L300,950" stroke="#1e3550" stroke-width="30"/></g>
<g transform="translate(257.9,172.2) scale(0.9888888888888889)"><rect x="0" y="0" width="18" height="18" rx="3.6" fill="#c9a300"/><rect x="1.3" y="1.3" width="15.4" height="6.5" rx="2" fill="#d7bd45" opacity=".8"/><g fill="#fff"><ellipse cx="9" cy="4.4" rx="1.75" ry="2.5" transform="rotate(0 9 9)"/><ellipse cx="9" cy="4.4" rx="1.75" ry="2.5" transform="rotate(45 9 9)"/><ellipse cx="9" cy="4.4" rx="1.75" ry="2.5" transform="rotate(90 9 9)"/><ellipse cx="9" cy="4.4" rx="1.75" ry="2.5" transform="rotate(135 9 9)"/><ellipse cx="9" cy="4.4" rx="1.75" ry="2.5" transform="rotate(180 9 9)"/><ellipse cx="9" cy="4.4" rx="1.75" ry="2.5" transform="rotate(225 9 9)"/><ellipse cx="9" cy="4.4" rx="1.75" ry="2.5" transform="rotate(270 9 9)"/><ellipse cx="9" cy="4.4" rx="1.75" ry="2.5" transform="rotate(315 9 9)"/></g><circle cx="9" cy="9" r="2" fill="#fbf6e0"/></g>
<path d="M306.5,147V155M313,147V155M319,147V155M325,147V155M331,147V155M306.5,175V182M313,175V182M319,175V182" stroke="#2d4560" stroke-width="2"/>
<rect x="300.7" y="154.8" width="37" height="20.7" rx="2.5" fill="#6b99c8" stroke="#2d4560" stroke-width="1.8"/>
<g transform="translate(324.1,172.2) scale(0.9888888888888889)"><rect x="0" y="0" width="18" height="18" rx="3.6" fill="#c9a300"/><rect x="1.3" y="1.3" width="15.4" height="6.5" rx="2" fill="#d7bd45" opacity=".8"/><g fill="#fff"><ellipse cx="9" cy="4.4" rx="1.75" ry="2.5" transform="rotate(0 9 9)"/><ellipse cx="9" cy="4.4" rx="1.75" ry="2.5" transform="rotate(45 9 9)"/><ellipse cx="9" cy="4.4" rx="1.75" ry="2.5" transform="rotate(90 9 9)"/><ellipse cx="9" cy="4.4" rx="1.75" ry="2.5" transform="rotate(135 9 9)"/><ellipse cx="9" cy="4.4" rx="1.75" ry="2.5" transform="rotate(180 9 9)"/><ellipse cx="9" cy="4.4" rx="1.75" ry="2.5" transform="rotate(225 9 9)"/><ellipse cx="9" cy="4.4" rx="1.75" ry="2.5" transform="rotate(270 9 9)"/><ellipse cx="9" cy="4.4" rx="1.75" ry="2.5" transform="rotate(315 9 9)"/></g><circle cx="9" cy="9" r="2" fill="#fbf6e0"/></g>
<rect x="363" y="145" width="42.5" height="42.5" fill="#8fb6e0" stroke="#203a5c" stroke-width="2.2"/>
<path d="M363,168.5H405.5M386.5,145V187.5M363,145L386.5,168.5M386.5,145L363,168.5M405.5,145L386.5,168.5M374.75,168.5V187.5M363,178H386.5" fill="none" stroke="#203a5c" stroke-width="1.8"/>
<path d="M388,167L404.5,146.5V167Z" fill="#6b99c8"/><path d="M364.5,170H385V186H364.5Z" fill="#6b99c8" opacity=".7"/>
<path d="M363,168.5H405.5M374.75,168.5V187.5M363,178H386.5" fill="none" stroke="#203a5c" stroke-width="1.8"/>
<g transform="translate(390.2,172.2) scale(0.9888888888888889)"><rect x="0" y="0" width="18" height="18" rx="3.6" fill="#c9a300"/><rect x="1.3" y="1.3" width="15.4" height="6.5" rx="2" fill="#d7bd45" opacity=".8"/><g fill="#fff"><ellipse cx="9" cy="4.4" rx="1.75" ry="2.5" transform="rotate(0 9 9)"/><ellipse cx="9" cy="4.4" rx="1.75" ry="2.5" transform="rotate(45 9 9)"/><ellipse cx="9" cy="4.4" rx="1.75" ry="2.5" transform="rotate(90 9 9)"/><ellipse cx="9" cy="4.4" rx="1.75" ry="2.5" transform="rotate(135 9 9)"/><ellipse cx="9" cy="4.4" rx="1.75" ry="2.5" transform="rotate(180 9 9)"/><ellipse cx="9" cy="4.4" rx="1.75" ry="2.5" transform="rotate(225 9 9)"/><ellipse cx="9" cy="4.4" rx="1.75" ry="2.5" transform="rotate(270 9 9)"/><ellipse cx="9" cy="4.4" rx="1.75" ry="2.5" transform="rotate(315 9 9)"/></g><circle cx="9" cy="9" r="2" fill="#fbf6e0"/></g>
<defs><linearGradient id="vl" x1="0" y1="0" x2="1" y2="1"><stop offset="0" stop-color="#e4ebf4"/><stop offset="1" stop-color="#86a6cc"/></linearGradient></defs>
<rect x="429" y="144.7" width="42.5" height="43" rx="3.5" fill="url(#vl)" stroke="#3a5a80" stroke-width="1.4"/>
<path d="M430.5,145.5L443,178L457,145.5H470.5" fill="none" stroke="#3a5a80" stroke-width="2.6"/>
<circle cx="430.5" cy="145.5" r="3.2" fill="#fff" stroke="#3a5a80" stroke-width="2"/>
<circle cx="443" cy="178" r="3.2" fill="#fff" stroke="#3a5a80" stroke-width="2"/>
<circle cx="457" cy="145.5" r="3.2" fill="#fff" stroke="#3a5a80" stroke-width="2"/>
<circle cx="470.5" cy="145.5" r="3.2" fill="#fff" stroke="#3a5a80" stroke-width="2"/>
<g transform="translate(456,172.2) scale(0.9888888888888889)"><rect x="0" y="0" width="18" height="18" rx="3.6" fill="#c9a300"/><rect x="1.3" y="1.3" width="15.4" height="6.5" rx="2" fill="#d7bd45" opacity=".8"/><g fill="#fff"><ellipse cx="9" cy="4.4" rx="1.75" ry="2.5" transform="rotate(0 9 9)"/><ellipse cx="9" cy="4.4" rx="1.75" ry="2.5" transform="rotate(45 9 9)"/><ellipse cx="9" cy="4.4" rx="1.75" ry="2.5" transform="rotate(90 9 9)"/><ellipse cx="9" cy="4.4" rx="1.75" ry="2.5" transform="rotate(135 9 9)"/><ellipse cx="9" cy="4.4" rx="1.75" ry="2.5" transform="rotate(180 9 9)"/><ellipse cx="9" cy="4.4" rx="1.75" ry="2.5" transform="rotate(225 9 9)"/><ellipse cx="9" cy="4.4" rx="1.75" ry="2.5" transform="rotate(270 9 9)"/><ellipse cx="9" cy="4.4" rx="1.75" ry="2.5" transform="rotate(315 9 9)"/></g><circle cx="9" cy="9" r="2" fill="#fbf6e0"/></g>
<rect x="500.5" y="150.5" width="2.2" height="2.2" fill="#fbfbfb"/><rect x="500" y="150" width="2.2" height="2.2" fill="#b0b0b0"/>
<rect x="506.5" y="150.5" width="2.2" height="2.2" fill="#fbfbfb"/><rect x="506" y="150" width="2.2" height="2.2" fill="#b0b0b0"/>
<rect x="500.5" y="156.5" width="2.2" height="2.2" fill="#fbfbfb"/><rect x="500" y="156" width="2.2" height="2.2" fill="#b0b0b0"/>
<rect x="506.5" y="156.5" width="2.2" height="2.2" fill="#fbfbfb"/><rect x="506" y="156" width="2.2" height="2.2" fill="#b0b0b0"/>
<rect x="500.5" y="162.5" width="2.2" height="2.2" fill="#fbfbfb"/><rect x="500" y="162" width="2.2" height="2.2" fill="#b0b0b0"/>
<rect x="506.5" y="162.5" width="2.2" height="2.2" fill="#fbfbfb"/><rect x="506" y="162" width="2.2" height="2.2" fill="#b0b0b0"/>
<rect x="500.5" y="168.5" width="2.2" height="2.2" fill="#fbfbfb"/><rect x="500" y="168" width="2.2" height="2.2" fill="#b0b0b0"/>
<rect x="506.5" y="168.5" width="2.2" height="2.2" fill="#fbfbfb"/><rect x="506" y="168" width="2.2" height="2.2" fill="#b0b0b0"/>
<rect x="500.5" y="174.5" width="2.2" height="2.2" fill="#fbfbfb"/><rect x="500" y="174" width="2.2" height="2.2" fill="#b0b0b0"/>
<rect x="506.5" y="174.5" width="2.2" height="2.2" fill="#fbfbfb"/><rect x="506" y="174" width="2.2" height="2.2" fill="#b0b0b0"/>
<rect x="500.5" y="180.5" width="2.2" height="2.2" fill="#fbfbfb"/><rect x="500" y="180" width="2.2" height="2.2" fill="#b0b0b0"/>
<rect x="506.5" y="180.5" width="2.2" height="2.2" fill="#fbfbfb"/><rect x="506" y="180" width="2.2" height="2.2" fill="#b0b0b0"/>
<path d="M529.5,189.5L538.0912085829394,182.68522670337245L555.9969793942017,148.06740313493194L548.0030206057983,143.93259686506806L530.097249794536,178.55042043350858Z" fill="#dcd8d2" stroke="#c8c4be" stroke-width="1.4"/>
<path d="M538.0912085829394,182.68522670337245L530.097249794536,178.55042043350858" stroke="#c8c4be" stroke-width="1.2"/>
<path d="M554.1592877187067,151.62027370755573L546.1653289303032,147.48546743769185" stroke="#ebebeb" stroke-width="2.5"/>
<path d="M539,189.5L548.097009365673,183.37673121602046L569.8233807478915,148.37313287800166L562.1766192521085,143.62686712199834L540.45024786989,178.63046546001715Z" fill="#dcd8d2" stroke="#c8c4be" stroke-width="1.4"/>
<path d="M548.097009365673,183.37673121602046L540.45024786989,178.63046546001715" stroke="#c8c4be" stroke-width="1.2"/>
<path d="M567.713929300779,151.77169354279414L560.067167804996,147.02542778679083" stroke="#ebebeb" stroke-width="2.5"/>
<path d="M563.8,185.2H576L569.9,190.8Z" fill="#555"/>
<path d="M598.5,189.5L607.3261070914277,183.32749373344595L630.345844518319,148.1921050292435L623.654155481681,143.8078949707565L600.6344180547896,178.94328367495896Z" fill="#e6e6dc" stroke="#c8c4be" stroke-width="1.4"/>
<path d="M607.3261070914277,183.32749373344595L600.6344180547896,178.94328367495896" stroke="#c8c4be" stroke-width="1.2"/>
<path d="M628.1537394890755,151.5379495475625L621.4620504524374,147.15373948907552" stroke="#ebebeb" stroke-width="2.5"/>
<rect x="658.7" y="144.5" width="38.5" height="38.5" rx="3.5" fill="#dadada" stroke="#cacaca" stroke-width="1.5"/>
<rect x="666" y="148" width="24" height="14" fill="#f2f2f2" stroke="#cfcfcf" stroke-width="1"/>
<rect x="668" y="170" width="18" height="12" fill="#f2f2f2" stroke="#cfcfcf" stroke-width="1"/>
<path d="M684,190L692.4078765266378,183.5534806047905L705.9276139535291,162.91809190058805L700.0723860464709,159.08190809941195L686.5526486195796,179.7172968036144Z" fill="#d8d0ca" stroke="#c8c4be" stroke-width="1.4"/>
<path d="M692.4078765266378,183.5534806047905L686.5526486195796,179.7172968036144" stroke="#c8c4be" stroke-width="1.2"/>
<path d="M703.7355089242856,166.26393641890706L697.8802810172274,162.42775261773096" stroke="#ebebeb" stroke-width="2.5"/>
<path d="M732,180L760,152" stroke="#dadada" stroke-width="3" stroke-dasharray="5,3.5"/>
<rect x="726.5" y="180" width="6" height="6" fill="#f0f0f0" stroke="#d4d4d4" stroke-width="1.5"/>
<rect x="759.5" y="146" width="6" height="6" fill="#f0f0f0" stroke="#d4d4d4" stroke-width="1.5"/>
<path d="M782.2,163H797.8L790.0,170.8Z" fill="#555"/>
<path d="M816,159C812,150 820,144 830,144.5C838,145 842,149 850,148C856,147.5 859,152 858,158C857,164 853,167 848,166C842,164 838,162 830,164C822,166 818,164 816,159Z" fill="#e1e3e1" stroke="#cbcdcb" stroke-width="2"/>
<g transform="translate(838.5,168.3) scale(0.9681818181818183)"><rect x="0" y="0" width="22" height="22" rx="4.5" fill="#cfcbbf"/><rect x="1.5" y="2" width="19" height="8.5" rx="2.5" fill="#dcd9cf" opacity=".85"/><g stroke="#fff" stroke-width="2.3"><path d="M11 2.2v17.6M3.4 6.6l15.2 8.8M3.4 15.4l15.2-8.8"/></g><circle cx="11" cy="11" r="4.6" fill="#fff"/><circle cx="11" cy="11" r="1.9" fill="#cfcbbf"/></g>
<path d="M884,187L895,160" stroke="#cfcfcf" stroke-width="1.5"/>
<path d="M898,188L908,177L920,188" fill="none" stroke="#cfcac2" stroke-width="5" stroke-linecap="round"/>
<path d="M975,178H1012V185H975Z" fill="#d6d3c8" stroke="#ccc8bd" stroke-width="1.5"/>
<path d="M985,188L996,173" stroke="#cfcfcf" stroke-width="2"/>
<path d="M1045,163H1073L1070,188H1048Z" fill="#ece6e6" stroke="#c9b5b5" stroke-width="2.2"/>
<path d="M1053,167V184M1059,167V184M1065,167V184" stroke="#c9b5b5" stroke-width="2.2"/>
<path d="M1102,153L1128,170" stroke="#cfcfcf" stroke-width="1.6"/>
<path d="M1102,160.5H1129L1124,166H1107C1104,166 1102,163 1102,160.5Z" fill="#e4e4e4" stroke="#cfcfcf" stroke-width="1.2"/>
<ellipse cx="1139.5" cy="157" rx="6" ry="4.5" fill="none" stroke="#c7b9b9" stroke-width="2.2" transform="rotate(-25 1139.5 157)"/>
<ellipse cx="1138.5" cy="175" rx="6" ry="4.5" fill="none" stroke="#c7b9b9" stroke-width="2.2" transform="rotate(35 1138.5 175)"/>
<path d="M1125,163L1134,160M1125,166L1133,171" stroke="#c7b9b9" stroke-width="2"/>
<path d="M1182.5,146.5H1198L1205.5,154V177H1182.5Z" fill="#f4f4f4" stroke="#dadada" stroke-width="1.6"/>
<path d="M1174.5,154.5H1190L1197.5,162V185H1174.5Z" fill="#f4f4f4" stroke="#c8c8c8" stroke-width="2"/>
<path d="M1178,165h10M1178,169h14M1178,173h8M1178,177h14M1178,181h14" stroke="#cccccc" stroke-width="1.8"/>
<rect x="1240.5" y="146.5" width="31" height="39" fill="#f0efec" stroke="#d0ccc6" stroke-width="1.8"/>
<rect x="1246.5" y="144.5" width="19" height="8.5" fill="#e6e6e6" stroke="#cccccc" stroke-width="1.6"/>
<path d="M1245,154.5H1258L1265,161V183H1245Z" fill="#f4f4f4" stroke="#c8c8c8" stroke-width="2"/>
<path d="M1248,163h10M1248,167h13M1248,171h8M1248,175h13M1248,179h13" stroke="#cccccc" stroke-width="1.8"/>
<path d="M1304.5,162L1318,148V157C1330,157 1340,162 1340,172C1340,180 1334,184 1326,184V178C1330,178 1332,175 1331,172C1330,168 1325,166 1318,166V176Z" fill="#ddd8d3" stroke="#cdc8c3" stroke-width="1"/>
<path d="M1406,162L1392.5,148V157C1380.5,157 1370.5,162 1370.5,172C1370.5,180 1376.5,184 1384.5,184V178C1380.5,178 1378.5,175 1379.5,172C1380.5,168 1385.5,166 1392.5,166V176Z" fill="#dcdedb" stroke="#cfd1ce" stroke-width="1"/>
<rect x="1438.5" y="150.5" width="2.2" height="2.2" fill="#fbfbfb"/><rect x="1438" y="150" width="2.2" height="2.2" fill="#b0b0b0"/>
<rect x="1444.5" y="150.5" width="2.2" height="2.2" fill="#fbfbfb"/><rect x="1444" y="150" width="2.2" height="2.2" fill="#b0b0b0"/>
<rect x="1438.5" y="156.5" width="2.2" height="2.2" fill="#fbfbfb"/><rect x="1438" y="156" width="2.2" height="2.2" fill="#b0b0b0"/>
<rect x="1444.5" y="156.5" width="2.2" height="2.2" fill="#fbfbfb"/><rect x="1444" y="156" width="2.2" height="2.2" fill="#b0b0b0"/>
<rect x="1438.5" y="162.5" width="2.2" height="2.2" fill="#fbfbfb"/><rect x="1438" y="162" width="2.2" height="2.2" fill="#b0b0b0"/>
<rect x="1444.5" y="162.5" width="2.2" height="2.2" fill="#fbfbfb"/><rect x="1444" y="162" width="2.2" height="2.2" fill="#b0b0b0"/>
<rect x="1438.5" y="168.5" width="2.2" height="2.2" fill="#fbfbfb"/><rect x="1438" y="168" width="2.2" height="2.2" fill="#b0b0b0"/>
<rect x="1444.5" y="168.5" width="2.2" height="2.2" fill="#fbfbfb"/><rect x="1444" y="168" width="2.2" height="2.2" fill="#b0b0b0"/>
<rect x="1438.5" y="174.5" width="2.2" height="2.2" fill="#fbfbfb"/><rect x="1438" y="174" width="2.2" height="2.2" fill="#b0b0b0"/>
<rect x="1444.5" y="174.5" width="2.2" height="2.2" fill="#fbfbfb"/><rect x="1444" y="174" width="2.2" height="2.2" fill="#b0b0b0"/>
<rect x="1438.5" y="180.5" width="2.2" height="2.2" fill="#fbfbfb"/><rect x="1438" y="180" width="2.2" height="2.2" fill="#b0b0b0"/>
<rect x="1444.5" y="180.5" width="2.2" height="2.2" fill="#fbfbfb"/><rect x="1444" y="180" width="2.2" height="2.2" fill="#b0b0b0"/>
<path d="M1462.5,161L1470,150.5H1503.5V171.5H1470Z" fill="#f6e05a" stroke="#c9a000" stroke-width="1.8"/>
<text x="1470.5" y="168" font-family="Liberation Sans" font-weight="bold" font-size="16" fill="#1e2a3a">abc</text>
<path d="M1559,161.4l5.2,5l-5.2,5M1566.8,161.4l5.2,5l-5.2,5" fill="none" stroke="#333" stroke-width="2" stroke-linecap="butt" stroke-linejoin="miter"/>
<rect x="1592.5" y="150.5" width="2.2" height="2.2" fill="#fbfbfb"/><rect x="1592" y="150" width="2.2" height="2.2" fill="#b0b0b0"/>
<rect x="1598.5" y="150.5" width="2.2" height="2.2" fill="#fbfbfb"/><rect x="1598" y="150" width="2.2" height="2.2" fill="#b0b0b0"/>
<rect x="1592.5" y="156.5" width="2.2" height="2.2" fill="#fbfbfb"/><rect x="1592" y="156" width="2.2" height="2.2" fill="#b0b0b0"/>
<rect x="1598.5" y="156.5" width="2.2" height="2.2" fill="#fbfbfb"/><rect x="1598" y="156" width="2.2" height="2.2" fill="#b0b0b0"/>
<rect x="1592.5" y="162.5" width="2.2" height="2.2" fill="#fbfbfb"/><rect x="1592" y="162" width="2.2" height="2.2" fill="#b0b0b0"/>
<rect x="1598.5" y="162.5" width="2.2" height="2.2" fill="#fbfbfb"/><rect x="1598" y="162" width="2.2" height="2.2" fill="#b0b0b0"/>
<rect x="1592.5" y="168.5" width="2.2" height="2.2" fill="#fbfbfb"/><rect x="1592" y="168" width="2.2" height="2.2" fill="#b0b0b0"/>
<rect x="1598.5" y="168.5" width="2.2" height="2.2" fill="#fbfbfb"/><rect x="1598" y="168" width="2.2" height="2.2" fill="#b0b0b0"/>
<rect x="1592.5" y="174.5" width="2.2" height="2.2" fill="#fbfbfb"/><rect x="1592" y="174" width="2.2" height="2.2" fill="#b0b0b0"/>
<rect x="1598.5" y="174.5" width="2.2" height="2.2" fill="#fbfbfb"/><rect x="1598" y="174" width="2.2" height="2.2" fill="#b0b0b0"/>
<rect x="1592.5" y="180.5" width="2.2" height="2.2" fill="#fbfbfb"/><rect x="1592" y="180" width="2.2" height="2.2" fill="#b0b0b0"/>
<rect x="1598.5" y="180.5" width="2.2" height="2.2" fill="#fbfbfb"/><rect x="1598" y="180" width="2.2" height="2.2" fill="#b0b0b0"/>
<defs><radialGradient id="glb" cx=".5" cy=".5" r=".5"><stop offset="0" stop-color="#9fd0ff"/><stop offset="1" stop-color="#2f7ad0"/></radialGradient><linearGradient id="gry" x1="0" y1="0" x2="1" y2="0"><stop offset="0" stop-color="#333"/><stop offset=".5" stop-color="#ddd"/><stop offset="1" stop-color="#444"/></linearGradient></defs>
<ellipse cx="1640" cy="162.5" rx="23.5" ry="20.8" fill="url(#gry)" stroke="#4a86d0" stroke-width="2"/>
<ellipse cx="1640" cy="162.5" rx="9.5" ry="20.8" fill="url(#glb)" stroke="#4a86d0" stroke-width="1.6"/>
<path d="M1617,162.5H1663M1620,152H1660M1620,173H1660" stroke="#6aa0e0" stroke-width="1.6"/>
<g transform="translate(1646,172.3) scale(0.9722222222222222)"><rect x="0" y="0" width="18" height="18" rx="3.6" fill="#5b915b"/><rect x="1.3" y="1.3" width="15.4" height="6.5" rx="2" fill="#8fb58f" opacity=".6"/><path d="M9 3v12M3 9h12" stroke="#fff" stroke-width="3.6"/></g>
<path d="M1656,186H1667L1661.5,190Z" fill="#222"/>
<path d="M1683,161.4l5.2,5l-5.2,5M1690.8,161.4l5.2,5l-5.2,5" fill="none" stroke="#333" stroke-width="2" stroke-linecap="butt" stroke-linejoin="miter"/>
<rect x="1716.5" y="150.5" width="2.2" height="2.2" fill="#fbfbfb"/><rect x="1716" y="150" width="2.2" height="2.2" fill="#b0b0b0"/>
<rect x="1722.5" y="150.5" width="2.2" height="2.2" fill="#fbfbfb"/><rect x="1722" y="150" width="2.2" height="2.2" fill="#b0b0b0"/>
<rect x="1716.5" y="156.5" width="2.2" height="2.2" fill="#fbfbfb"/><rect x="1716" y="156" width="2.2" height="2.2" fill="#b0b0b0"/>
<rect x="1722.5" y="156.5" width="2.2" height="2.2" fill="#fbfbfb"/><rect x="1722" y="156" width="2.2" height="2.2" fill="#b0b0b0"/>
<rect x="1716.5" y="162.5" width="2.2" height="2.2" fill="#fbfbfb"/><rect x="1716" y="162" width="2.2" height="2.2" fill="#b0b0b0"/>
<rect x="1722.5" y="162.5" width="2.2" height="2.2" fill="#fbfbfb"/><rect x="1722" y="162" width="2.2" height="2.2" fill="#b0b0b0"/>
<rect x="1716.5" y="168.5" width="2.2" height="2.2" fill="#fbfbfb"/><rect x="1716" y="168" width="2.2" height="2.2" fill="#b0b0b0"/>
<rect x="1722.5" y="168.5" width="2.2" height="2.2" fill="#fbfbfb"/><rect x="1722" y="168" width="2.2" height="2.2" fill="#b0b0b0"/>
<rect x="1716.5" y="174.5" width="2.2" height="2.2" fill="#fbfbfb"/><rect x="1716" y="174" width="2.2" height="2.2" fill="#b0b0b0"/>
<rect x="1722.5" y="174.5" width="2.2" height="2.2" fill="#fbfbfb"/><rect x="1722" y="174" width="2.2" height="2.2" fill="#b0b0b0"/>
<rect x="1716.5" y="180.5" width="2.2" height="2.2" fill="#fbfbfb"/><rect x="1716" y="180" width="2.2" height="2.2" fill="#b0b0b0"/>
<rect x="1722.5" y="180.5" width="2.2" height="2.2" fill="#fbfbfb"/><rect x="1722" y="180" width="2.2" height="2.2" fill="#b0b0b0"/>
<path d="M1764,146C1754,146 1754,150 1754,154V158H1764V160H1750C1745,160 1744,166 1744,170C1744,176 1746,180 1750,180H1754V174C1754,170 1757,168 1761,168H1770C1773,168 1775,166 1775,163V154C1775,150 1772,146 1764,146Z" fill="#3b74ab"/>
<circle cx="1758.5" cy="150.5" r="1.5" fill="#fff"/>
<path d="M1764,186C1774,186 1774,182 1774,178V174H1764V172H1778C1783,172 1784,166 1784,162C1784,156 1782,152 1778,152H1774V158C1774,162 1771,164 1767,164H1758C1755,164 1753,166 1753,169V178C1753,182 1756,186 1764,186Z" fill="#f8cf40"/>
<circle cx="1769.5" cy="181.5" r="1.5" fill="#fff"/>
<path d="M1774.5,176.5L1785,181.5L1774.5,186.5" fill="none" stroke="#444" stroke-width="2.4"/>
<path d="M1807,161.10000000000002l5.2,5l-5.2,5M1814.8,161.10000000000002l5.2,5l-5.2,5" fill="none" stroke="#333" stroke-width="2" stroke-linecap="butt" stroke-linejoin="miter"/>
<rect x="1840.5" y="150.5" width="2.2" height="2.2" fill="#fbfbfb"/><rect x="1840" y="150" width="2.2" height="2.2" fill="#b0b0b0"/>
<rect x="1846.5" y="150.5" width="2.2" height="2.2" fill="#fbfbfb"/><rect x="1846" y="150" width="2.2" height="2.2" fill="#b0b0b0"/>
<rect x="1840.5" y="156.5" width="2.2" height="2.2" fill="#fbfbfb"/><rect x="1840" y="156" width="2.2" height="2.2" fill="#b0b0b0"/>
<rect x="1846.5" y="156.5" width="2.2" height="2.2" fill="#fbfbfb"/><rect x="1846" y="156" width="2.2" height="2.2" fill="#b0b0b0"/>
<rect x="1840.5" y="162.5" width="2.2" height="2.2" fill="#fbfbfb"/><rect x="1840" y="162" width="2.2" height="2.2" fill="#b0b0b0"/>
<rect x="1846.5" y="162.5" width="2.2" height="2.2" fill="#fbfbfb"/><rect x="1846" y="162" width="2.2" height="2.2" fill="#b0b0b0"/>
<rect x="1840.5" y="168.5" width="2.2" height="2.2" fill="#fbfbfb"/><rect x="1840" y="168" width="2.2" height="2.2" fill="#b0b0b0"/>
<rect x="1846.5" y="168.5" width="2.2" height="2.2" fill="#fbfbfb"/><rect x="1846" y="168" width="2.2" height="2.2" fill="#b0b0b0"/>
<rect x="1840.5" y="174.5" width="2.2" height="2.2" fill="#fbfbfb"/><rect x="1840" y="174" width="2.2" height="2.2" fill="#b0b0b0"/>
<rect x="1846.5" y="174.5" width="2.2" height="2.2" fill="#fbfbfb"/><rect x="1846" y="174" width="2.2" height="2.2" fill="#b0b0b0"/>
<rect x="1840.5" y="180.5" width="2.2" height="2.2" fill="#fbfbfb"/><rect x="1840" y="180" width="2.2" height="2.2" fill="#b0b0b0"/>
<rect x="1846.5" y="180.5" width="2.2" height="2.2" fill="#fbfbfb"/><rect x="1846" y="180" width="2.2" height="2.2" fill="#b0b0b0"/>
<rect x="1868.5" y="144.5" width="39" height="41.5" fill="#6b96c4" stroke="#111" stroke-width="1.8"/>
<rect x="1869" y="145" width="9.5" height="40.5" fill="#2c3e50"/>
<text x="1886" y="177" font-family="Liberation Serif" font-size="26" fill="#fff">?</text>
<rect x="1938.5" y="150.5" width="2.2" height="2.2" fill="#fbfbfb"/><rect x="1938" y="150" width="2.2" height="2.2" fill="#b0b0b0"/>
<rect x="1944.5" y="150.5" width="2.2" height="2.2" fill="#fbfbfb"/><rect x="1944" y="150" width="2.2" height="2.2" fill="#b0b0b0"/>
<rect x="1938.5" y="156.5" width="2.2" height="2.2" fill="#fbfbfb"/><rect x="1938" y="156" width="2.2" height="2.2" fill="#b0b0b0"/>
<rect x="1944.5" y="156.5" width="2.2" height="2.2" fill="#fbfbfb"/><rect x="1944" y="156" width="2.2" height="2.2" fill="#b0b0b0"/>
<rect x="1938.5" y="162.5" width="2.2" height="2.2" fill="#fbfbfb"/><rect x="1938" y="162" width="2.2" height="2.2" fill="#b0b0b0"/>
<rect x="1944.5" y="162.5" width="2.2" height="2.2" fill="#fbfbfb"/><rect x="1944" y="162" width="2.2" height="2.2" fill="#b0b0b0"/>
<rect x="1938.5" y="168.5" width="2.2" height="2.2" fill="#fbfbfb"/><rect x="1938" y="168" width="2.2" height="2.2" fill="#b0b0b0"/>
<rect x="1944.5" y="168.5" width="2.2" height="2.2" fill="#fbfbfb"/><rect x="1944" y="168" width="2.2" height="2.2" fill="#b0b0b0"/>
<rect x="1938.5" y="174.5" width="2.2" height="2.2" fill="#fbfbfb"/><rect x="1938" y="174" width="2.2" height="2.2" fill="#b0b0b0"/>
<rect x="1944.5" y="174.5" width="2.2" height="2.2" fill="#fbfbfb"/><rect x="1944" y="174" width="2.2" height="2.2" fill="#b0b0b0"/>
<rect x="1938.5" y="180.5" width="2.2" height="2.2" fill="#fbfbfb"/><rect x="1938" y="180" width="2.2" height="2.2" fill="#b0b0b0"/>
<rect x="1944.5" y="180.5" width="2.2" height="2.2" fill="#fbfbfb"/><rect x="1944" y="180" width="2.2" height="2.2" fill="#b0b0b0"/>
<defs><filter id="sh" x="-20%" y="-50%" width="140%" height="200%"><feGaussianBlur stdDeviation="6"/></filter></defs>
<rect x="890" y="136" width="182" height="44" fill="#000" opacity=".18" filter="url(#sh)"/>
<rect x="895" y="134.8" width="172" height="38.5" fill="#fff" stroke="#000" stroke-width="2"/>
<text x="902.5" y="161.3" font-family="Liberation Sans" font-weight="bold" font-size="22.5" fill="#1e1e1e">Zoom to Layer</text>
<rect x="6.5" y="228.5" width="2.2" height="2.2" fill="#fbfbfb"/><rect x="6" y="228" width="2.2" height="2.2" fill="#b0b0b0"/>
<rect x="12.5" y="228.5" width="2.2" height="2.2" fill="#fbfbfb"/><rect x="12" y="228" width="2.2" height="2.2" fill="#b0b0b0"/>
<rect x="6.5" y="234.5" width="2.2" height="2.2" fill="#fbfbfb"/><rect x="6" y="234" width="2.2" height="2.2" fill="#b0b0b0"/>
<rect x="12.5" y="234.5" width="2.2" height="2.2" fill="#fbfbfb"/><rect x="12" y="234" width="2.2" height="2.2" fill="#b0b0b0"/>
<rect x="6.5" y="240.5" width="2.2" height="2.2" fill="#fbfbfb"/><rect x="6" y="240" width="2.2" height="2.2" fill="#b0b0b0"/>
<rect x="12.5" y="240.5" width="2.2" height="2.2" fill="#fbfbfb"/><rect x="12" y="240" width="2.2" height="2.2" fill="#b0b0b0"/>
<rect x="6.5" y="246.5" width="2.2" height="2.2" fill="#fbfbfb"/><rect x="6" y="246" width="2.2" height="2.2" fill="#b0b0b0"/>
<rect x="12.5" y="246.5" width="2.2" height="2.2" fill="#fbfbfb"/><rect x="12" y="246" width="2.2" height="2.2" fill="#b0b0b0"/>
<rect x="6.5" y="252.5" width="2.2" height="2.2" fill="#fbfbfb"/><rect x="6" y="252" width="2.2" height="2.2" fill="#b0b0b0"/>
<rect x="12.5" y="252.5" width="2.2" height="2.2" fill="#fbfbfb"/><rect x="12" y="252" width="2.2" height="2.2" fill="#b0b0b0"/>
<rect x="6.5" y="258.5" width="2.2" height="2.2" fill="#fbfbfb"/><rect x="6" y="258" width="2.2" height="2.2" fill="#b0b0b0"/>
<rect x="12.5" y="258.5" width="2.2" height="2.2" fill="#fbfbfb"/><rect x="12" y="258" width="2.2" height="2.2" fill="#b0b0b0"/>
<defs><linearGradient id="gs" x1="0" y1="0" x2="0" y2="1"><stop offset="0" stop-color="#6fa54a"/><stop offset="1" stop-color="#9ed37a"/></linearGradient></defs>
<rect x="30" y="220" width="48" height="48" fill="url(#gs)"/>
<path d="M78,220L30,268H78Z" fill="#fff" opacity=".08"/><path d="M30,220H78L55,243Z" fill="#fff" opacity=".12"/>
<circle cx="58.5" cy="239.5" r="12.5" fill="none" stroke="#f4f6fb" stroke-width="4.2"/>
<line x1="49.5" y1="249" x2="37" y2="261.5" stroke="#f4f6fb" stroke-width="5.5" stroke-linecap="round"/>
<g transform="translate(92,216) scale(0.04396)"><path d="M90,90H1020V1180H90Z" fill="#fed23a"/><path d="M250,90H340V1180H250Z" fill="#ffe48a"/><path d="M650,90H800V250C760,300 700,350 720,420L640,300Z" fill="#ffe48a" opacity=".7"/><path d="M90,90H250V820H90Z" fill="#8a0a40"/><path d="M115,130L340,230L480,210L340,320L115,360Z" fill="#66c866"/><path d="M340,230L480,210L340,320Z" fill="#00a000"/><path d="M115,480L220,460L245,800L115,820Z" fill="#c07098"/><path d="M320,550L430,520L450,720L340,745Z" fill="#2f7a82"/><path d="M560,90H650C640,200 640,300 720,430C800,560 820,640 760,800C720,900 760,960 800,1040L700,1060C660,960 640,880 680,760C720,650 700,560 620,450C560,350 540,200 560,90Z" fill="#3a72d8"/><path d="M800,700C900,780 1000,850 1020,900V1050L820,1040C780,950 780,850 800,700Z" fill="#86aee8"/><path d="M210,1180C260,1060 380,1000 520,1020C620,1040 680,1100 640,1180H560C580,1130 520,1090 440,1100C340,1110 300,1150 300,1180Z" fill="#3a72d8"/><path d="M700,1080L820,1060L900,1180H760Z" fill="#3a72d8"/><path d="M100,900C200,860 320,840 480,800" fill="none" stroke="#2a4a68" stroke-width="60"/><path d="M180,900L100,1100" fill="none" stroke="#2a4a68" stroke-width="60"/><circle cx="230" cy="880" r="40" fill="#fff"/><circle cx="500" cy="810" r="40" fill="#fff"/><path d="M575,630L1065,95L1185,195L690,740Z" fill="#a04c18"/><path d="M1125,145L1185,195L690,740L640,690Z" fill="#6e3210" opacity=".55"/><path d="M575,630L690,740L580,770L540,730Z" fill="#d8a070"/><path d="M540,730L580,770L500,830Z" fill="#222"/></g>
<rect x="170.5" y="228.5" width="2.2" height="2.2" fill="#fbfbfb"/><rect x="170" y="228" width="2.2" height="2.2" fill="#b0b0b0"/>
<rect x="176.5" y="228.5" width="2.2" height="2.2" fill="#fbfbfb"/><rect x="176" y="228" width="2.2" height="2.2" fill="#b0b0b0"/>
<rect x="170.5" y="234.5" width="2.2" height="2.2" fill="#fbfbfb"/><rect x="170" y="234" width="2.2" height="2.2" fill="#b0b0b0"/>
<rect x="176.5" y="234.5" width="2.2" height="2.2" fill="#fbfbfb"/><rect x="176" y="234" width="2.2" height="2.2" fill="#b0b0b0"/>
<rect x="170.5" y="240.5" width="2.2" height="2.2" fill="#fbfbfb"/><rect x="170" y="240" width="2.2" height="2.2" fill="#b0b0b0"/>
<rect x="176.5" y="240.5" width="2.2" height="2.2" fill="#fbfbfb"/><rect x="176" y="240" width="2.2" height="2.2" fill="#b0b0b0"/>
<rect x="170.5" y="246.5" width="2.2" height="2.2" fill="#fbfbfb"/><rect x="170" y="246" width="2.2" height="2.2" fill="#b0b0b0"/>
<rect x="176.5" y="246.5" width="2.2" height="2.2" fill="#fbfbfb"/><rect x="176" y="246" width="2.2" height="2.2" fill="#b0b0b0"/>
<rect x="170.5" y="252.5" width="2.2" height="2.2" fill="#fbfbfb"/><rect x="170" y="252" width="2.2" height="2.2" fill="#b0b0b0"/>
<rect x="176.5" y="252.5" width="2.2" height="2.2" fill="#fbfbfb"/><rect x="176" y="252" width="2.2" height="2.2" fill="#b0b0b0"/>
<rect x="170.5" y="258.5" width="2.2" height="2.2" fill="#fbfbfb"/><rect x="170" y="258" width="2.2" height="2.2" fill="#b0b0b0"/>
<rect x="176.5" y="258.5" width="2.2" height="2.2" fill="#fbfbfb"/><rect x="176" y="258" width="2.2" height="2.2" fill="#b0b0b0"/>
<circle cx="217.8" cy="243.9" r="24.3" fill="#065473"/>
<rect x="204.5" y="226" width="27" height="30" rx="5" fill="#fff"/>
<rect x="208" y="233" width="20" height="10" rx="2" fill="#065473"/>
<rect x="211.5" y="228" width="13" height="1.6" rx=".8" fill="#065473"/>
<circle cx="209.5" cy="250" r="2" fill="#065473"/><circle cx="226.5" cy="250" r="2" fill="#065473"/>
<rect x="206" y="255" width="4" height="6" rx="1" fill="#fff"/><rect x="226" y="255" width="4" height="6" rx="1" fill="#fff"/>
<rect x="268.5" y="228.5" width="2.2" height="2.2" fill="#fbfbfb"/><rect x="268" y="228" width="2.2" height="2.2" fill="#b0b0b0"/>
<rect x="274.5" y="228.5" width="2.2" height="2.2" fill="#fbfbfb"/><rect x="274" y="228" width="2.2" height="2.2" fill="#b0b0b0"/>
<rect x="268.5" y="234.5" width="2.2" height="2.2" fill="#fbfbfb"/><rect x="268" y="234" width="2.2" height="2.2" fill="#b0b0b0"/>
<rect x="274.5" y="234.5" width="2.2" height="2.2" fill="#fbfbfb"/><rect x="274" y="234" width="2.2" height="2.2" fill="#b0b0b0"/>
<rect x="268.5" y="240.5" width="2.2" height="2.2" fill="#fbfbfb"/><rect x="268" y="240" width="2.2" height="2.2" fill="#b0b0b0"/>
<rect x="274.5" y="240.5" width="2.2" height="2.2" fill="#fbfbfb"/><rect x="274" y="240" width="2.2" height="2.2" fill="#b0b0b0"/>
<rect x="268.5" y="246.5" width="2.2" height="2.2" fill="#fbfbfb"/><rect x="268" y="246" width="2.2" height="2.2" fill="#b0b0b0"/>
<rect x="274.5" y="246.5" width="2.2" height="2.2" fill="#fbfbfb"/><rect x="274" y="246" width="2.2" height="2.2" fill="#b0b0b0"/>
<rect x="268.5" y="252.5" width="2.2" height="2.2" fill="#fbfbfb"/><rect x="268" y="252" width="2.2" height="2.2" fill="#b0b0b0"/>
<rect x="274.5" y="252.5" width="2.2" height="2.2" fill="#fbfbfb"/><rect x="274" y="252" width="2.2" height="2.2" fill="#b0b0b0"/>
<rect x="268.5" y="258.5" width="2.2" height="2.2" fill="#fbfbfb"/><rect x="268" y="258" width="2.2" height="2.2" fill="#b0b0b0"/>
<rect x="274.5" y="258.5" width="2.2" height="2.2" fill="#fbfbfb"/><rect x="274" y="258" width="2.2" height="2.2" fill="#b0b0b0"/>
<g fill="none" stroke-width="1.4"><path d="M296.3,225.5H303.3V235.1M303.3,244.8H333.2M338.5,235V245" stroke="#f08c8c"/><path d="M294.5,253.4V235.1H320.7M320.7,254.5V264.3H303.8" stroke="#a8b4f8"/><path d="M321.4,225.5H329.7V254.5H303.3" stroke="#80e880"/></g>
<circle cx="303.3" cy="225.5" r="1.1" fill="#fff" stroke="#555" stroke-width=".6"/>
<circle cx="329.7" cy="225.5" r="1.1" fill="#fff" stroke="#555" stroke-width=".6"/>
<circle cx="303.3" cy="235.1" r="1.1" fill="#fff" stroke="#555" stroke-width=".6"/>
<circle cx="312" cy="235.1" r="1.1" fill="#fff" stroke="#555" stroke-width=".6"/>
<circle cx="320.7" cy="235.1" r="1.1" fill="#fff" stroke="#555" stroke-width=".6"/>
<circle cx="303.3" cy="254.5" r="1.1" fill="#fff" stroke="#555" stroke-width=".6"/>
<circle cx="312" cy="254.5" r="1.1" fill="#fff" stroke="#555" stroke-width=".6"/>
<circle cx="320.7" cy="254.5" r="1.1" fill="#fff" stroke="#555" stroke-width=".6"/>
<circle cx="329.7" cy="254.5" r="1.1" fill="#fff" stroke="#555" stroke-width=".6"/>
<circle cx="312" cy="264.3" r="1.1" fill="#fff" stroke="#555" stroke-width=".6"/>
<circle cx="320.7" cy="264.3" r="1.1" fill="#fff" stroke="#555" stroke-width=".6"/>
<circle cx="294.5" cy="235.1" r="1.1" fill="#fff" stroke="#555" stroke-width=".6"/>
<circle cx="329.7" cy="235.1" r="1.1" fill="#fff" stroke="#555" stroke-width=".6"/>
<text x="292.3" y="251.8" font-family="Liberation Sans" font-weight="bold" font-size="19" fill="#3a4350" letter-spacing="0.2" textLength="47" lengthAdjust="spacingAndGlyphs">GTFS</text>
<path d="M303.3,244.8H333.2" stroke="#f08c8c" stroke-width="1.6" opacity=".7"/>
<rect x="366.5" y="228.5" width="2.2" height="2.2" fill="#fbfbfb"/><rect x="366" y="228" width="2.2" height="2.2" fill="#b0b0b0"/>
<rect x="372.5" y="228.5" width="2.2" height="2.2" fill="#fbfbfb"/><rect x="372" y="228" width="2.2" height="2.2" fill="#b0b0b0"/>
<rect x="366.5" y="234.5" width="2.2" height="2.2" fill="#fbfbfb"/><rect x="366" y="234" width="2.2" height="2.2" fill="#b0b0b0"/>
<rect x="372.5" y="234.5" width="2.2" height="2.2" fill="#fbfbfb"/><rect x="372" y="234" width="2.2" height="2.2" fill="#b0b0b0"/>
<rect x="366.5" y="240.5" width="2.2" height="2.2" fill="#fbfbfb"/><rect x="366" y="240" width="2.2" height="2.2" fill="#b0b0b0"/>
<rect x="372.5" y="240.5" width="2.2" height="2.2" fill="#fbfbfb"/><rect x="372" y="240" width="2.2" height="2.2" fill="#b0b0b0"/>
<rect x="366.5" y="246.5" width="2.2" height="2.2" fill="#fbfbfb"/><rect x="366" y="246" width="2.2" height="2.2" fill="#b0b0b0"/>
<rect x="372.5" y="246.5" width="2.2" height="2.2" fill="#fbfbfb"/><rect x="372" y="246" width="2.2" height="2.2" fill="#b0b0b0"/>
<rect x="366.5" y="252.5" width="2.2" height="2.2" fill="#fbfbfb"/><rect x="366" y="252" width="2.2" height="2.2" fill="#b0b0b0"/>
<rect x="372.5" y="252.5" width="2.2" height="2.2" fill="#fbfbfb"/><rect x="372" y="252" width="2.2" height="2.2" fill="#b0b0b0"/>
<rect x="366.5" y="258.5" width="2.2" height="2.2" fill="#fbfbfb"/><rect x="366" y="258" width="2.2" height="2.2" fill="#b0b0b0"/>
<rect x="372.5" y="258.5" width="2.2" height="2.2" fill="#fbfbfb"/><rect x="372" y="258" width="2.2" height="2.2" fill="#b0b0b0"/>
<rect x="397" y="228.5" width="38.5" height="15.5" fill="#dfe6ef" stroke="#1e3a60" stroke-width="2"/>
<rect x="402" y="230" width="4" height="13" fill="#a8c4e4"/><rect x="420" y="230" width="8" height="13" fill="#a8c4e4"/>
<rect x="406.5" y="224.5" width="11" height="23.5" fill="#6b99c8" stroke="#1e3a60" stroke-width="2"/>
<path d="M410.5,248V252M410.5,235V238" stroke="#1e3a60" stroke-width="2"/>
<path d="M480,223V265M459,244H501" stroke="#d2d4d6" stroke-width="3.2" stroke-linecap="round"/>
<circle cx="480" cy="244" r="14.5" fill="none" stroke="#d6d6d6" stroke-width="2" stroke-dasharray="9,4.5" transform="rotate(28 480 244)"/>
<circle cx="480" cy="244" r="9" fill="none" stroke="#d6d6d6" stroke-width="2" stroke-dasharray="4,10" transform="rotate(20 480 244)"/>
<rect x="519.5" y="225" width="2" height="38" fill="#d4d4d4"/><rect x="521.5" y="225" width="1.5" height="38" fill="#fff"/>
<rect x="542.5" y="226.8" width="26.8" height="26.5" fill="#ececec" stroke="#7a7a7a" stroke-width="2"/>
<circle cx="561.9" cy="245.6" r="12.5" fill="none" stroke="#2f4f77" stroke-width="2" stroke-dasharray="11,4.7" transform="rotate(-45 561.9 245.6)"/>
<path d="M561.9,230V261M546,245.6H577.5" stroke="#6b99c8" stroke-width="3" stroke-linecap="round"/>
<path d="M576.2,263H587.8L582.0,268.8Z" fill="#555"/>
<path d="M611,265L619,247" stroke="#dcdcdc" stroke-width="2.6" stroke-dasharray="4,3"/>
<path d="M633,236L647,229" stroke="#dcdcdc" stroke-width="2.6" stroke-dasharray="4,3"/>
<circle cx="622.5" cy="238" r="11" fill="none" stroke="#d8d8d8" stroke-width="2.2" stroke-dasharray="12,5" transform="rotate(-20 622.5 238)"/>
<path d="M622.5,223V253M607,237.5H638" stroke="#d2d6da" stroke-width="3.2" stroke-linecap="round"/>
<rect x="630" y="248" width="20" height="20" rx="3.5" fill="#d6d6d6"/>
<path d="M640,251.5V264.5M633.5,258H646.5" stroke="#efefef" stroke-width="3.6"/>
<path d="M671,235C668,225 678,221 688,222.5C696,223.5 701,227 708,226C713,226 715,230 714,236C713,242 710,245 705,245C699,244 695,240 686,242C678,244 673,242 671,235Z" fill="#8bc08b" stroke="#444" stroke-width="2.2"/>
<g transform="translate(694.3,246) scale(0.990909090909091)"><rect x="0" y="0" width="22" height="22" rx="4.5" fill="#c9a300"/><rect x="1.5" y="2" width="19" height="8.5" rx="2.5" fill="#dcc350" opacity=".85"/><g stroke="#fff" stroke-width="2.3"><path d="M11 2.2v17.6M3.4 6.6l15.2 8.8M3.4 15.4l15.2-8.8"/></g><circle cx="11" cy="11" r="4.6" fill="#fff"/><circle cx="11" cy="11" r="1.9" fill="#c9a300"/></g>
<rect x="738" y="224.5" width="6" height="6" fill="#f0f0f0" stroke="#d4d4d4" stroke-width="1.5"/>
<path d="M741,234C740,248 746,256 760,257" fill="none" stroke="#dcdcdc" stroke-width="2.5" stroke-dasharray="4,3"/>
<path d="M756.5,236.5L762,248" stroke="#d6d2ca" stroke-width="3"/>
<circle cx="756" cy="235.5" r="2.6" fill="none" stroke="#d6d2ca" stroke-width="1.6"/>
<path d="M758.5,249.5L767,245.5L779,261L766,264.5Z" fill="#e2dfd6"/>
<path d="M758.5,249.5L767,245.5" stroke="#dcc4c4" stroke-width="3"/>
<ellipse cx="772" cy="264" rx="9" ry="2.2" fill="#e6e6e6"/>
<rect x="797" y="225" width="2" height="38" fill="#d4d4d4"/><rect x="799" y="225" width="1.5" height="38" fill="#fff"/>
<circle cx="838" cy="243.8" r="19.3" fill="#6b99c8" stroke="#2f5a80" stroke-width="2"/>
<path d="M823,244A15,15 0 0 1 843,229" fill="none" stroke="#a8c4e4" stroke-width="1.6"/>
<circle cx="840.5" cy="233.5" r="3.3" fill="#fff" stroke="#2f4f77" stroke-width=".6"/>
<path d="M831,245.5C833.5,242 838,240.5 843,240.5L839.5,252C839,253.8 840.5,254 842.5,253C840.5,256.8 836,258.5 832.5,257.5C830.5,256.8 830.8,254.5 831.5,252.5L834.5,245C833.5,244.8 832,245 831,245.5Z" fill="#fff" stroke="#2f4f77" stroke-width=".7"/>
<path d="M902,242L924.5,262" stroke="#222" stroke-width="10.5" stroke-linecap="round"/>
<path d="M904.5,244.5L924,261.5" stroke="#f0d878" stroke-width="7" stroke-linecap="round"/>
<path d="M899.5,239.5L905.5,245" stroke="#333" stroke-width="8.5"/>
<path d="M884.5,222.5C890,219.5 898,221 901,228C903,233 901.5,238.5 897,242C892.5,245 885,244.5 881.5,240C879.5,237.5 879.5,234.5 880.5,232.5L886,236L891.5,232.5L890.5,226Z" fill="#eceeea" stroke="#222" stroke-width="1.8" stroke-linejoin="round"/>
<path d="M893,241C897,239 899,236 899.5,233" stroke="#c0c4be" stroke-width="2" fill="none"/>
<circle cx="922" cy="260" r="2.3" fill="#fff" stroke="#222" stroke-width="1.2"/>
<path d="M925.4,263.3H931.5L928.45,268.2Z" fill="#333"/>
</svg>
<svg class="a" style="left:0;top:0;position:absolute" width="1958" height="1274" viewBox="0 0 1958 1274">
<g fill="none" stroke="#6a6864" stroke-width="2.2"><path d="M441.5,295L443.5,293H458.5L460.5,295V311L458.5,313H443.5L441.5,311Z"/><rect x="445.3" y="300.5" width="8" height="8"/><path d="M449.4,300.5V297H456.6V304.5H453.3"/><path d="M468.5,295L470.5,293H486.5L488.5,295V311L486.5,313H470.5L468.5,311Z"/></g><path d="M473.5,297l11.5,12.5M485,297l-11.5,12.5" stroke="#6a6864" stroke-width="3.6"/>
<g fill="none" stroke="#6a6864" stroke-width="2.2"><path d="M441.5,589L443.5,587H458.5L460.5,589V605L458.5,607H443.5L441.5,605Z"/><rect x="445.3" y="594.5" width="8" height="8"/><path d="M449.4,594.5V591H456.6V598.5H453.3"/><path d="M468.5,589L470.5,587H486.5L488.5,589V605L486.5,607H470.5L468.5,605Z"/></g><path d="M473.5,591l11.5,12.5M485,591l-11.5,12.5" stroke="#6a6864" stroke-width="3.6"/>
<rect x="15" y="339" width="22.5" height="22" fill="none" stroke="#868680" stroke-width="1.6"/>
<g transform="translate(30.3,356.2) scale(0.6555555555555556)"><rect x="0" y="0" width="18" height="18" rx="3.6" fill="#4f8a4f"/><rect x="1.3" y="1.3" width="15.4" height="6.5" rx="2" fill="#8fb58f" opacity=".6"/><path d="M9 3v12M3 9h12" stroke="#fff" stroke-width="3.6"/></g>
<g transform="translate(59.7,334.1) scale(0.707)"><path d="M6.1,24.5C5,14 12,4.1 24,4.1C31,4.1 36,7 40.8,11.4L45.7,5.3V24.9H29L35.1,18.4C30,14.5 25,12.6 20.4,12.6C13,12.6 8.5,17 6.1,24.5Z" fill="url(#rfa)" stroke="#2d62aa" stroke-width="1.3" stroke-linejoin="miter"/><path d="M6.1,24.5C5,14 12,4.1 24,4.1C31,4.1 36,7 40.8,11.4L45.7,5.3V24.9H29L35.1,18.4C30,14.5 25,12.6 20.4,12.6C13,12.6 8.5,17 6.1,24.5Z" fill="url(#rfb)" stroke="#2d62aa" stroke-width="1.3" transform="rotate(180 25.9 25.9)"/></g>
<g transform="translate(115,337.3) scale(1.0)"><path d="M0.8,0.8H25.5V6L16.5,17V30L10,26V17L0.8,6Z" fill="#6b99c8" stroke="#2f4f77" stroke-width="1.5" stroke-linejoin="round"/><rect x="2.3" y="2.2" width="22" height="3.8" fill="#fde84f"/></g>
<g transform="translate(164,337)"><path d="M2.5,4V27M2.5,13.5H9M2.5,25.5H9" fill="none" stroke="#a8a8a4" stroke-width="1.8"/><path d="M0,4H26" stroke="#8a8a84" stroke-width="2"/><rect x="8.5" y="10" width="5.5" height="5.5" fill="#f8e030" stroke="#f59000" stroke-width="2"/><rect x="8.5" y="22" width="5.5" height="5.5" fill="#f8e030" stroke="#f59000" stroke-width="2"/>
<path d="M19.5,0L29.5,11H23.5V27.5H15.5V11H9.5Z" fill="#6b99c8" stroke="#2f4f77" stroke-width="1.6" stroke-linejoin="round"/>
</g>
<circle cx="228" cy="352" r="12.8" fill="#6b99c8" stroke="#2f5a80" stroke-width="1.6"/>
<circle cx="230.3" cy="344.8" r="2.2" fill="#fff"/>
<path d="M223.3,352.2C225,349.8 228,348.8 231.4,348.8L229,356.6C228.7,357.8 229.7,357.9 231.1,357.2C229.7,359.8 226.7,360.9 224.3,360.3C223,359.8 223.2,358.3 223.7,356.9L225.7,351.9C225,351.8 224,351.9 223.3,352.2Z" fill="#fff"/>
<path d="M10,398L18,404L10,410Z" fill="#505050"/>
<path d="M10,434L18,440L10,446Z" fill="#505050"/>
<path d="M10,470L18,476L10,482Z" fill="#505050"/>
<path d="M10,506L18,512L10,518Z" fill="#505050"/>
<path d="M10,542L18,548L10,554Z" fill="#505050"/>
<path d="M38.2,390.3H53L56.5,394.1H65.6V399.4H54.7L51.2,395.9H38.2Z" fill="#86877f"/>
<path d="M39.2,399.5H50.9L54.4,403.7H64.6V416.4H39.2Z" fill="#ececec" stroke="#86877f" stroke-width="2"/>
<polygon points="52.00,425.50 56.00,436.00 67.22,436.56 58.47,443.60 61.40,454.44 52.00,448.30 42.60,454.44 45.53,443.60 36.78,436.56 48.00,436.00" fill="#fdf978" stroke="#d8ac00" stroke-width="1.8" stroke-linejoin="round"/>
<path d="M43,465H65V489.5H43Z" fill="url(#paper)" stroke="#999" stroke-width="1.5"/>
<path d="M38.5,467a2.5,2.5 0 0 1 5,0V486a2.5,2.5 0 0 0 -5,0Z" fill="#f0f0f0" stroke="#999" stroke-width="1.5"/>
<path d="M38.5,486V487a3,2.5 0 0 0 3,2.5H44" fill="#ddd" stroke="#999" stroke-width="1.5"/>
<path d="M53.3,462.8H59.8V474.5L56.5,477L53.3,474.5Z" fill="#6b99c8" stroke="#2f4f77" stroke-width="1.3"/>
<path d="M38.5,500V524.5H65.5V504.5H52L49.5,500Z" fill="#ededed" stroke="#8a8a84" stroke-width="1.8"/>
<path d="M45.5,514L52,507.5L58.5,514M47.5,512.5V520.5H56.5V512.5" fill="none" stroke="#111" stroke-width="2.2"/>
<path d="M38.5,536V560.5H65.5V540.5H52L49.5,536Z" fill="#ededed" stroke="#8a8a84" stroke-width="1.8"/>
<rect x="233" y="570" width="1.6" height="1.6" fill="#b0b0b0"/>
<rect x="238" y="570" width="1.6" height="1.6" fill="#b0b0b0"/>
<rect x="243" y="570" width="1.6" height="1.6" fill="#b0b0b0"/>
<rect x="248" y="570" width="1.6" height="1.6" fill="#b0b0b0"/>
<rect x="253" y="570" width="1.6" height="1.6" fill="#b0b0b0"/>
<rect x="258" y="570" width="1.6" height="1.6" fill="#b0b0b0"/>
<rect x="500" y="738" width="2" height="2" fill="#a8a8a8"/>
<rect x="500" y="744" width="2" height="2" fill="#a8a8a8"/>
<rect x="500" y="750" width="2" height="2" fill="#a8a8a8"/>
<rect x="500" y="756" width="2" height="2" fill="#a8a8a8"/>
<rect x="500" y="762" width="2" height="2" fill="#a8a8a8"/>
<rect x="500" y="768" width="2" height="2" fill="#a8a8a8"/>
<rect x="421.7" y="125" width="1.6" height="2" fill="#f0f0f0"/>
<rect x="1510.7" y="125" width="1.6" height="2" fill="#f0f0f0"/>
<rect x="1836.7" y="125" width="1.6" height="2" fill="#f0f0f0"/>
<rect x="488.2" y="203" width="1.6" height="2" fill="#f0f0f0"/>
<rect x="1426.7" y="203" width="1.6" height="2" fill="#f0f0f0"/>
<rect x="1580.7" y="203" width="1.6" height="2" fill="#f0f0f0"/>
<rect x="1704.2" y="203" width="1.6" height="2" fill="#f0f0f0"/>
<rect x="1829.2" y="203" width="1.6" height="2" fill="#f0f0f0"/>
<rect x="1926.7" y="203" width="1.6" height="2" fill="#f0f0f0"/>
<rect x="157.7" y="279" width="1.6" height="2" fill="#f0f0f0"/>
<rect x="255.7" y="279" width="1.6" height="2" fill="#f0f0f0"/>
<rect x="353.7" y="279" width="1.6" height="2" fill="#f0f0f0"/>
<path d="M13,652L19,640L31,647L25,658Z" fill="#e84040"/>
<path d="M15,647L20,637L33,644L28,654Z" fill="#3a78d0"/>
<path d="M17,642L21,635L33,642L30,649Z" fill="#f0d020"/>
<path d="M22,645L33,638L40,650L29,657Z" fill="#e0b070" stroke="#9a6a30" stroke-width="1"/>
<path d="M35,642L42,635" stroke="#d09030" stroke-width="3.5" stroke-linecap="round"/>
<path d="M25,648l10,-6M27,652l10,-6M26,645l6,8M30,643l6,8" stroke="#9a6a30" stroke-width=".8"/>
<path d="M64.5,661V645.5H68.5M64.5,661H80" fill="none" stroke="#8a8a84" stroke-width="1.5"/>
<path d="M68.5,657V641.5H72.5M68.5,657H84" fill="none" stroke="#8a8a84" stroke-width="1.5"/>
<rect x="72.5" y="637.5" width="17" height="16" fill="none" stroke="#8a8a84" stroke-width="1.5"/>
<path d="M77,650V634C77,629.5 83,629.5 83,634V646" fill="none" stroke="#2f4f77" stroke-width="2"/>
<g transform="translate(80,651) scale(0.6666666666666666)"><rect x="0" y="0" width="18" height="18" rx="3.6" fill="#4f8a4f"/><rect x="1.3" y="1.3" width="15.4" height="6.5" rx="2" fill="#8fb58f" opacity=".6"/><path d="M9 3v12M3 9h12" stroke="#fff" stroke-width="3.6"/></g>
<path d="M114,645.5C120,636 136,635.5 143,645.5C136,655 120,655 114,645.5Z" fill="#fff" stroke="#8a8a84" stroke-width="1.5"/>
<path d="M117,637C124,633 134,633 141,637" fill="none" stroke="#8a8a84" stroke-width="1.3"/>
<circle cx="128" cy="645.5" r="6.8" fill="#6b99c8" stroke="#2f4f77" stroke-width="1.2"/>
<circle cx="127.5" cy="644.5" r="2.6" fill="#000"/><circle cx="126.5" cy="643.5" r="1" fill="#fff"/>
<path d="M136.2,657.3H148.3L142.25,662.7Z" fill="#555"/>
<g transform="translate(165.5,631.5) scale(1.0)"><path d="M0.8,0.8H25.5V6L16.5,17V30L10,26V17L0.8,6Z" fill="#6b99c8" stroke="#2f4f77" stroke-width="1.5" stroke-linejoin="round"/><rect x="2.3" y="2.2" width="22" height="3.8" fill="#fde84f"/></g>
<path d="M186,657.3H197.8L191.9,662.7Z" fill="#555"/>
<path d="M228.5,635.5C226,632.5 217,632 216.5,637.5C216.2,640 218.5,641.5 221,641.8C217.5,642.5 215.5,644.5 215.8,647C216.2,651.5 226,652 230,648" fill="none" stroke="#5a2a7a" stroke-width="2.3" stroke-linecap="round"/>
<path d="M221,641.8H224.5" stroke="#5a2a7a" stroke-width="1.8"/>
<path d="M229.5,661.5V651C229.5,648 231,647.5 233,647.5H240C242.5,647.5 243.8,649 243.8,651V661.5H239V654L236.5,651.5L234,654V661.5Z" fill="#8a8a84"/>
<path d="M256.2,642.5H271.9L264.04999999999995,650.3Z" fill="#555"/>
<g transform="translate(288.5,631.5)"><path d="M2.5,4V27M2.5,13.5H9M2.5,25.5H9" fill="none" stroke="#a8a8a4" stroke-width="1.8"/><path d="M0,4H26" stroke="#8a8a84" stroke-width="2"/><rect x="8.5" y="10" width="5.5" height="5.5" fill="#f8e030" stroke="#f59000" stroke-width="2"/><rect x="8.5" y="22" width="5.5" height="5.5" fill="#f8e030" stroke="#f59000" stroke-width="2"/>
<path d="M19.5,28L29.5,17H23.5V0.5H15.5V17H9.5Z" fill="#6b99c8" stroke="#2f4f77" stroke-width="1.6" stroke-linejoin="round"/>
</g>
<g transform="translate(338.5,630.5)"><path d="M2.5,4V27M2.5,13.5H9M2.5,25.5H9" fill="none" stroke="#a8a8a4" stroke-width="1.8"/><path d="M0,4H26" stroke="#8a8a84" stroke-width="2"/><rect x="8.5" y="10" width="5.5" height="5.5" fill="#f8e030" stroke="#f59000" stroke-width="2"/><rect x="8.5" y="22" width="5.5" height="5.5" fill="#f8e030" stroke="#f59000" stroke-width="2"/>
<path d="M19.5,0L29.5,11H23.5V27.5H15.5V11H9.5Z" fill="#6b99c8" stroke="#2f4f77" stroke-width="1.6" stroke-linejoin="round"/>
</g>
<rect x="388.8" y="632.8" width="20" height="20" fill="none" stroke="#868680" stroke-width="1.6"/>
<rect x="403.5" y="650" width="12.5" height="10" rx="2.5" fill="#e84850"/>
<rect x="406" y="654" width="7.5" height="2.2" fill="#fff"/>
<path d="M50,698L57,706.5L65.5,689.5" fill="none" stroke="#222" stroke-width="3.8" stroke-linejoin="miter"/>
<path d="M470.5,402H485.5L478,394Z" fill="#505050"/><path d="M470.5,546H485.5L478,554Z" fill="#505050"/>
<circle cx="31.9" cy="1247.7" r="8.2" fill="none" stroke="#7a7a7a" stroke-width="2"/>
<path d="M37.8,1253.6L45,1260.8" stroke="#7a7a7a" stroke-width="2.4" stroke-linecap="round"/>
<path d="M770.4,1234.3C764,1234 758,1238 759.2,1243C760,1247 764,1252 766.5,1257.7C768.5,1262 772,1264.5 776,1264C781,1263.5 785,1259 784.3,1254.5C783.5,1250 780,1245 776,1241.2C774.5,1237.5 773,1234.5 770.4,1234.3Z" fill="#c4b4b4" opacity=".75" transform="translate(2.6,1.2)"/>
<path d="M770.4,1234.3C764,1234 758,1238 759.2,1243C760,1247 764,1252 766.5,1257.7C768.5,1262 772,1264.5 776,1264C781,1263.5 785,1259 784.3,1254.5C783.5,1250 780,1245 776,1241.2C774.5,1237.5 773,1234.5 770.4,1234.3Z" fill="#fff" stroke="#000" stroke-width="2.4"/>
<ellipse cx="767.8" cy="1243.2" rx="6" ry="8.6" transform="rotate(-28 767.8 1243.2)" fill="#fff" stroke="#000" stroke-width="2.3"/>
<path d="M766.8,1240.6L770.6,1247.6" stroke="#2a2020" stroke-width="3" stroke-linecap="round"/>
<path d="M764.5,1251.8C768.5,1251 772.5,1249.8 776.5,1247" fill="none" stroke="#000" stroke-width="2"/>
<circle cx="776.7" cy="1257.3" r="2" fill="#fff" stroke="#000" stroke-width="1.8"/>
<circle cx="759.6" cy="1254.7" r="1.3" fill="#000"/>
<circle cx="762.5" cy="1251.7" r="1.3" fill="#000"/>
<circle cx="779" cy="1240.2" r="1.3" fill="#000"/>
<circle cx="783" cy="1239.5" r="1.3" fill="#000"/>
<circle cx="786.3" cy="1236.2" r="1.3" fill="#000"/>
<path d="M985.2,1246H1000.7L993,1254Z" fill="#555"/>
<path d="M1044.5,1251V1244C1044.5,1238 1059.5,1238 1059.5,1244V1251" fill="none" stroke="#9a9a9a" stroke-width="2.6"/>
<path d="M1044.5,1251V1244C1044.5,1238 1059.5,1238 1059.5,1244V1251" fill="none" stroke="#ddd" stroke-width="1"/>
<rect x="1040.3" y="1250.4" width="23.4" height="15.5" rx="2.5" fill="#6a6a6a"/>
<path d="M1258.1,1246H1273.6999999999998L1265.8999999999999,1238.5Z" fill="#555"/><path d="M1258.1,1255.5H1273.6999999999998L1265.8999999999999,1263.5Z" fill="#555"/>
<path d="M1488.6,1246H1504.1999999999998L1496.3999999999999,1238.5Z" fill="#555"/><path d="M1488.6,1255.5H1504.1999999999998L1496.3999999999999,1263.5Z" fill="#555"/>
<rect x="1525.2" y="1237.2" width="26" height="26" fill="#fff" stroke="#b4b4b4" stroke-width="1.5"/>
<path d="M1530.5,1250L1537,1259L1546,1242" fill="none" stroke="#222" stroke-width="3.2"/>
<g fill="none" stroke="#777" stroke-width="1.8"><path d="M1670,1249C1674,1244 1694,1244 1699,1249"/><circle cx="1684.2" cy="1249.5" r="13.5"/><ellipse cx="1684.2" cy="1249.5" rx="6" ry="13.5"/><path d="M1684.2,1236V1263M1671,1245H1697.5M1671,1254H1697.5"/></g>
<path d="M1668,1249L1674,1241H1695L1701,1249" fill="none" stroke="#777" stroke-width="2"/>
<path d="M1886,1235.7C1895,1235.7 1901.6,1241 1901.6,1248C1901.6,1253 1898,1257 1893,1259C1894.5,1262 1897,1264 1899.5,1265.5C1894,1265.5 1890,1263 1887.5,1260.3C1878,1260.3 1870.2,1255 1870.2,1248C1870.2,1241 1877,1235.7 1886,1235.7Z" fill="#6b6b6b"/>
<circle cx="1878.5" cy="1248.5" r="2.6" fill="#fff"/><circle cx="1886" cy="1248.5" r="2.6" fill="#fff"/><circle cx="1893.5" cy="1248.5" r="2.6" fill="#fff"/>
<rect x="1956" y="1256" width="2" height="2" fill="#bbb"/>
<rect x="1950" y="1262" width="2" height="2" fill="#bbb"/>
<rect x="1956" y="1262" width="2" height="2" fill="#bbb"/>
<rect x="1944" y="1268" width="2" height="2" fill="#bbb"/>
<rect x="1950" y="1268" width="2" height="2" fill="#bbb"/>
<rect x="1956" y="1268" width="2" height="2" fill="#bbb"/>
</svg>
</body></html>
